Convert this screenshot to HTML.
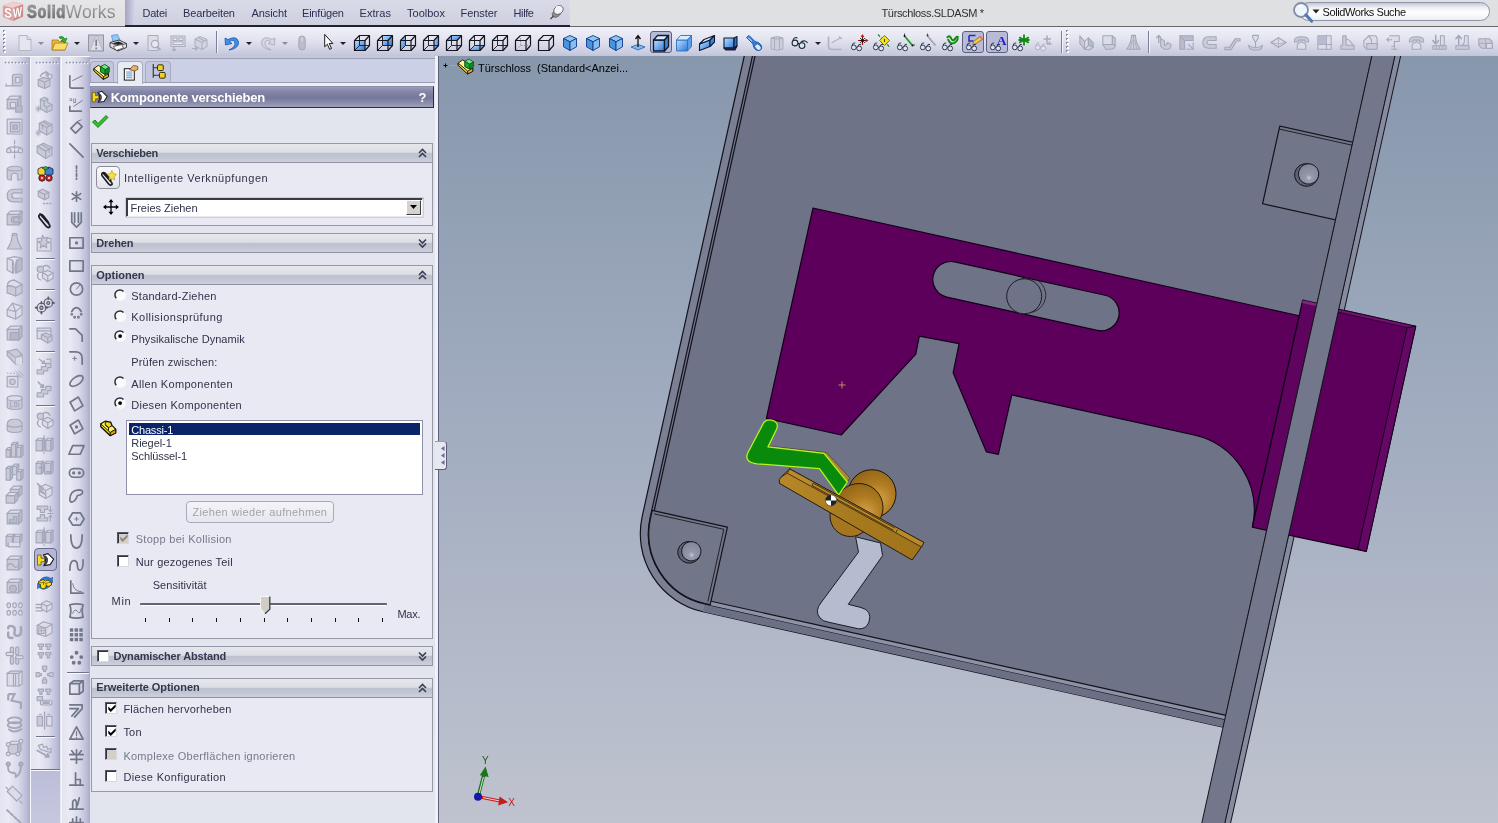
<!DOCTYPE html><html><head><meta charset="utf-8"><title>SolidWorks - Türschloss.SLDASM</title>
<style>
html,body{margin:0;padding:0}
body{width:1498px;height:823px;position:relative;overflow:hidden;background:#e3e5ee;font-family:'Liberation Sans',sans-serif;font-size:11px}
.t{position:absolute;white-space:nowrap;line-height:1;}
.ic{position:absolute;overflow:visible}
.abs{position:absolute}
.sec{position:absolute;left:91px;width:342px;border:1px solid #9799a9;box-sizing:border-box;background:#e8e9f2}
.sh{position:absolute;left:0;top:0;right:0;height:18px;border-bottom:1px solid #9092a2;
 background:linear-gradient(#e6e7ec 0%,#dcdee6 46%,#bec2d0 52%,#c2c6d3 75%,#cdd0dc 100%)}
.cb{position:absolute;width:11px;height:11px;background:#fff;border:1px solid;border-color:#55586a #d8d8e0 #d8d8e0 #55586a;box-shadow:inset 1px 1px 0 #303040}
.rb{position:absolute;width:11px;height:11px;border-radius:50%;background:#fff;box-shadow:inset 1px 1px 1.5px #30303c, 0.5px 0.5px 0 #fff}
</style></head><body><div id="root" style="position:absolute;left:0;top:0;width:1498px;height:823px;will-change:transform">
<svg width="0" height="0" style="position:absolute"><defs><linearGradient id="bl" x1="0" y1="0" x2="1" y2="1"><stop offset="0" stop-color="#bfe0ff"/><stop offset="1" stop-color="#2a78d8"/></linearGradient></defs></svg>
<div class="abs" style="left:0;top:0;width:1498px;height:26px;background:#dfe0e1;border-bottom:1px solid #66666c"></div>
<div class="abs" style="left:0;top:0;width:125px;height:26px;background:linear-gradient(#e6e6e8,#dedee2)"></div>
<div class="abs" style="left:125px;top:0;width:444.5px;height:25px;background:linear-gradient(#dadbe8,#cfd0df);border-bottom:2px solid #20212c"></div>
<div class="abs" style="left:125px;top:0;width:10px;height:25px;background:linear-gradient(90deg,#a3a5c3,#d5d6e8)"></div>
<svg class="ic" style="left:2px;top:1px" width="22" height="21" viewBox="0 0 22 21"><path d="M1 4.5 L11.5 1 L21 3.5 L21 15.5 L11 20 L1 16 Z" fill="#d99c9c" stroke="#e6bcbc" stroke-width="0.7"/><path d="M1 4.5 L11.5 1 L21 3.5 L11 7 Z" fill="#f0cfcf"/><path d="M11 7 V20 L21 15.5 V3.5 Z" fill="#cf8888"/><path d="M11 7 V20" stroke="#ecc4c4" stroke-width="0.8"/><text x="2.2" y="16.6" font-family="Liberation Sans,sans-serif" font-weight="bold" font-size="13.5" fill="#fff" transform="skewY(8)" style="transform-origin:6px 12px" textLength="7.6" lengthAdjust="spacingAndGlyphs">S</text><text x="11" y="16" font-family="Liberation Sans,sans-serif" font-weight="bold" font-size="13.5" fill="#fff" transform="skewY(-12)" style="transform-origin:16px 12px" textLength="9" lengthAdjust="spacingAndGlyphs">W</text></svg>
<span class="t" style="left:26.9px;top:3.69px;font-size:17.5px;font-weight:bold;color:#7c7c80;letter-spacing:0.000px;background:linear-gradient(#9a9a9c 25%,#6c6c70 80%);-webkit-background-clip:text;background-clip:text;-webkit-text-fill-color:transparent;transform:scaleX(0.84);transform-origin:0 0;letter-spacing:0.7px;-webkit-text-stroke:0.5px #808084;">Solid</span><span class="t" style="left:65.5px;top:3.69px;font-size:17.5px;font-weight:normal;color:#98989c;letter-spacing:0.184px;background:linear-gradient(#a0a0a2 25%,#7c7c80 80%);-webkit-background-clip:text;background-clip:text;-webkit-text-fill-color:transparent;">Works</span>
<span class="t" style="left:142.5px;top:8.19px;font-size:11px;font-weight:normal;color:#2c2f55;letter-spacing:-0.247px;">Datei</span>
<span class="t" style="left:183px;top:8.19px;font-size:11px;font-weight:normal;color:#2c2f55;letter-spacing:-0.135px;">Bearbeiten</span>
<span class="t" style="left:251.5px;top:8.19px;font-size:11px;font-weight:normal;color:#2c2f55;letter-spacing:-0.096px;">Ansicht</span>
<span class="t" style="left:302px;top:8.19px;font-size:11px;font-weight:normal;color:#2c2f55;letter-spacing:-0.205px;">Einfügen</span>
<span class="t" style="left:359.5px;top:8.19px;font-size:11px;font-weight:normal;color:#2c2f55;letter-spacing:0.062px;">Extras</span>
<span class="t" style="left:407px;top:8.19px;font-size:11px;font-weight:normal;color:#2c2f55;letter-spacing:0.013px;">Toolbox</span>
<span class="t" style="left:460.5px;top:8.19px;font-size:11px;font-weight:normal;color:#2c2f55;letter-spacing:-0.049px;">Fenster</span>
<span class="t" style="left:513.5px;top:8.19px;font-size:11px;font-weight:normal;color:#2c2f55;letter-spacing:-0.379px;">Hilfe</span>
<svg class="ic" style="left:547.5px;top:3px" width="18" height="18" viewBox="0 0 18 18"><ellipse cx="8.5" cy="10.5" rx="4.6" ry="3.4" transform="rotate(-35 8.5 10.5)" fill="#8c8e9a" stroke="#555" stroke-width="0.6"/><ellipse cx="10.5" cy="7" rx="5" ry="4" transform="rotate(-35 10.5 7)" fill="#f4f4f8" stroke="#666" stroke-width="0.9"/><path d="M8 4.5 Q10 3 12.5 3.8" stroke="#fff" stroke-width="1.2" fill="none"/><path d="M5.5 13 L2.5 16" stroke="#444" stroke-width="1.3"/></svg>
<span class="t" style="left:881.5px;top:7.89px;font-size:11px;font-weight:normal;color:#303030;letter-spacing:-0.351px;">Türschloss.SLDASM *</span>
<div class="abs" style="left:1299px;top:2px;width:191px;height:19px;border:1px solid #8e94a8;border-radius:10px;background:linear-gradient(#c6c9d6 0%,#eef0f5 28%,#ffffff 55%,#eceef4 100%);box-sizing:border-box"></div>
<svg class="ic" style="left:1292px;top:1px" width="22" height="24" viewBox="0 0 22 24"><circle cx="9" cy="9" r="7" fill="#eef4fb" stroke="#7f8da8" stroke-width="1.8"/><path d="M6 6 Q8 4 11 5" stroke="#fff" stroke-width="1.5" fill="none"/><path d="M14 14 L19.5 20" stroke="#4d79b8" stroke-width="3.2" stroke-linecap="round"/></svg>
<svg class="ic" style="left:1312px;top:9px" width="8" height="5" viewBox="0 0 8 5"><path d="M0.5 0.5 H7.5 L4 4.5 Z" fill="#222"/></svg>
<span class="t" style="left:1322.5px;top:6.89px;font-size:11px;font-weight:normal;color:#101010;letter-spacing:-0.411px;">SolidWorks Suche</span>
<div class="abs" style="left:0;top:27px;width:1498px;height:29px;background:linear-gradient(#eff0f8 0%,#e4e5f1 40%,#cfd1e3 80%,#c2c4d9 100%)"></div>
<div class="abs" style="left:4.2px;top:31px;width:2px;height:2px;background:#fff;box-shadow:-1px -1px 0 #8a8ca6"></div><div class="abs" style="left:4.2px;top:35px;width:2px;height:2px;background:#fff;box-shadow:-1px -1px 0 #8a8ca6"></div><div class="abs" style="left:4.2px;top:39px;width:2px;height:2px;background:#fff;box-shadow:-1px -1px 0 #8a8ca6"></div><div class="abs" style="left:4.2px;top:43px;width:2px;height:2px;background:#fff;box-shadow:-1px -1px 0 #8a8ca6"></div><div class="abs" style="left:4.2px;top:47px;width:2px;height:2px;background:#fff;box-shadow:-1px -1px 0 #8a8ca6"></div><div class="abs" style="left:4.2px;top:51px;width:2px;height:2px;background:#fff;box-shadow:-1px -1px 0 #8a8ca6"></div>
<div class="abs" style="left:1067px;top:31px;width:2px;height:2px;background:#fff;box-shadow:-1px -1px 0 #8a8ca6"></div><div class="abs" style="left:1067px;top:35px;width:2px;height:2px;background:#fff;box-shadow:-1px -1px 0 #8a8ca6"></div><div class="abs" style="left:1067px;top:39px;width:2px;height:2px;background:#fff;box-shadow:-1px -1px 0 #8a8ca6"></div><div class="abs" style="left:1067px;top:43px;width:2px;height:2px;background:#fff;box-shadow:-1px -1px 0 #8a8ca6"></div><div class="abs" style="left:1067px;top:47px;width:2px;height:2px;background:#fff;box-shadow:-1px -1px 0 #8a8ca6"></div><div class="abs" style="left:1067px;top:51px;width:2px;height:2px;background:#fff;box-shadow:-1px -1px 0 #8a8ca6"></div>
<svg class="ic" style="left:14.5px;top:32.5px" width="20.0" height="20.0" viewBox="0 0 20 20"><path d="M4 2.5 H12 L16 6.5 V17.5 H4 Z" fill="#e4e5ee" stroke="#b4b6c6"/><path d="M12 2.5 V6.5 H16" fill="none" stroke="#b4b6c6"/></svg><svg class="ic" style="left:38px;top:41.5px" width="6" height="3" viewBox="0 0 6 3"><path d="M0 0 H6 L3 3 Z" fill="#8a8c9c"/></svg><svg class="ic" style="left:49.5px;top:32.5px" width="20.0" height="20.0" viewBox="0 0 20 20"><path d="M2 7 H8 L9.5 8.5 H15 V17 H2 Z" fill="#e9b93a" stroke="#a8781a" stroke-width="0.8"/><path d="M2 17 L5 10 H18 L15 17 Z" fill="#fbdc6a" stroke="#a8781a" stroke-width="0.8"/><path d="M9 4 Q13 2 15 6 L17 5 L15 10 L11 7.5 L13 7 Q12 5 10 5.5 Z" fill="#2eb82e" stroke="#176a17" stroke-width="0.6"/></svg><svg class="ic" style="left:74px;top:41.5px" width="6" height="3" viewBox="0 0 6 3"><path d="M0 0 H6 L3 3 Z" fill="#222"/></svg><svg class="ic" style="left:86.0px;top:32.5px" width="20.0" height="20.0" viewBox="0 0 20 20"><rect x="2.5" y="2" width="15" height="16" fill="#c6c8d3" stroke="#9294a3"/><path d="M4 17 L9.5 3.5 H11 L16.5 17" fill="#dddee6" stroke="#a7a9b9" stroke-width="0.7"/><path d="M10.2 6.5 V13 M10.2 14.6 V16.2" stroke="#7e8090" stroke-width="1.7"/></svg><svg class="ic" style="left:108.0px;top:32.5px" width="20.0" height="20.0" viewBox="0 0 20 20"><path d="M5 9 L3.5 2.5 L9.5 1.5 L12.5 8" fill="#8ec8f6" stroke="#5a90c8" stroke-width="0.8"/><path d="M2 9.5 L11 7 L18.5 10.5 V14.5 L10 18 L2 14 Z" fill="#dcdce2" stroke="#333" stroke-width="0.9" stroke-linejoin="round"/><path d="M2 9.5 L10 13 L18.5 10.5 M10 13 V18" fill="none" stroke="#333" stroke-width="0.8"/><path d="M5.5 13.5 L8 17.5 L15.5 15 L13.5 11.5 Z" fill="#fff" stroke="#333" stroke-width="0.7"/><path d="M4.5 10.2 L10.5 8.6 L15.5 10.6 L10 12 Z" fill="#222"/></svg><svg class="ic" style="left:133px;top:41.5px" width="6" height="3" viewBox="0 0 6 3"><path d="M0 0 H6 L3 3 Z" fill="#222"/></svg><svg class="ic" style="left:143.5px;top:32.5px" width="20.0" height="20.0" viewBox="0 0 20 20"><g stroke="#a9acbd" fill="#dcdde6"><path d="M4 2.5 H14 V17.5 H4 Z"/><circle cx="11" cy="11" r="3.6" fill="#e8e9f0" stroke-width="1.3"/><path d="M13.5 13.8 L16.5 17" stroke-width="1.8"/></g></svg><svg class="ic" style="left:167.5px;top:32.5px" width="20.0" height="20.0" viewBox="0 0 20 20"><g stroke="#a9acbd" fill="#dcdde6"><rect x="3" y="3" width="14" height="10.5"/><rect x="5" y="5" width="4" height="2.5" fill="#eee"/><rect x="11" y="5" width="4" height="2.5" fill="#eee"/><rect x="5" y="9" width="10" height="2.5" fill="#eee"/><path d="M6 14 V18 M4 16 L6 18 L8 16" fill="none" stroke-width="1.2"/></g></svg><svg class="ic" style="left:190.0px;top:32.5px" width="20.0" height="20.0" viewBox="0 0 20 20"><g stroke="#a9acbd" fill="#d2d4df" stroke-linejoin="round"><path d="M5 6 L10 3.5 L17 6.5 V13.5 L12 16.5 L5 13 Z"/><path d="M5 6 L12 9.5 V16.5 M12 9.5 L17 6.5 M8 4.5 L14.5 8" fill="none"/><path d="M2 15.5 H7 M5 13.5 L7.2 15.5 L5 17.5" fill="none" stroke-width="1.2"/></g></svg><div class="abs" style="left:216px;top:31px;width:1px;height:22px;background:#7c7f98;box-shadow:1px 0 0 #f4f4fa"></div><svg class="ic" style="left:221.0px;top:32.5px" width="20.0" height="20.0" viewBox="0 0 20 20"><path d="M4 5 L4.5 12 L11 10.5 L8.5 8.5 Q13 5.5 14 10 Q14.5 14 8 17 Q18 15.5 17.5 9 Q16 2 7 6.5 Z" fill="#3f8fe8" stroke="#1b57a8" stroke-width="0.8" stroke-linejoin="round"/></svg><svg class="ic" style="left:245.5px;top:41.5px" width="6" height="3" viewBox="0 0 6 3"><path d="M0 0 H6 L3 3 Z" fill="#222"/></svg><svg class="ic" style="left:259.0px;top:32.5px" width="20.0" height="20.0" viewBox="0 0 20 20"><path d="M16 5 L15.5 12 L9 10.5 L11.5 8.5 Q7 5.5 6 10 Q5.5 14 12 17 Q2 15.5 2.5 9 Q4 2 13 6.5 Z" fill="#d4d6e0" stroke="#a6a8b8" stroke-width="0.8" stroke-linejoin="round"/></svg><svg class="ic" style="left:281.5px;top:41.5px" width="6" height="3" viewBox="0 0 6 3"><path d="M0 0 H6 L3 3 Z" fill="#8a8c9c"/></svg><svg class="ic" style="left:292.0px;top:32.5px" width="20.0" height="20.0" viewBox="0 0 20 20"><rect x="6.8" y="3" width="6.4" height="14" rx="3.2" fill="#bbbdca" stroke="#a6a8b8"/><path d="M10 4.5 V8.5" stroke="#d8d9e2" stroke-width="1.6"/></svg><svg class="ic" style="left:319.0px;top:33.0px" width="19.0" height="19.0" viewBox="0 0 20 20"><path d="M6 1.5 V14.5 L8.8 11.8 L11.2 17.2 L13.2 16.3 L10.8 11 H14.6 Z" fill="#fff" stroke="#111" stroke-width="1" stroke-linejoin="round"/></svg><svg class="ic" style="left:340px;top:41.5px" width="6" height="3" viewBox="0 0 6 3"><path d="M0 0 H6 L3 3 Z" fill="#222"/></svg><svg class="ic" style="left:352.0px;top:32.5px" width="20.0" height="20.0" viewBox="0 0 20 20"><g fill="none" stroke="#15151d" stroke-width="1.2" stroke-linejoin="round"><path d="M2.5 7.5 H13 V17.5 H2.5 Z" fill="url(#bl)" stroke="none"/><path d="M2.5 7.5 H13 V17.5 H2.5 Z"/><path d="M2.5 7.5 L7.5 2.5 H17.5 L13 7.5 M17.5 2.5 V12.5 L13 17.5"/><path d="M7.5 2.5 V12.5 H17.5 M7.5 12.5 L2.5 17.5" stroke-width="0.9"/></g></svg><svg class="ic" style="left:375.0px;top:32.5px" width="20.0" height="20.0" viewBox="0 0 20 20"><g fill="none" stroke="#15151d" stroke-width="1.2" stroke-linejoin="round"><path d="M7.5 2.5 H17.5 V12.5 H7.5 Z" fill="url(#bl)" stroke="none"/><path d="M2.5 7.5 H13 V17.5 H2.5 Z"/><path d="M2.5 7.5 L7.5 2.5 H17.5 L13 7.5 M17.5 2.5 V12.5 L13 17.5"/><path d="M7.5 2.5 V12.5 H17.5 M7.5 12.5 L2.5 17.5" stroke-width="0.9"/></g></svg><svg class="ic" style="left:398.0px;top:32.5px" width="20.0" height="20.0" viewBox="0 0 20 20"><g fill="none" stroke="#15151d" stroke-width="1.2" stroke-linejoin="round"><path d="M2.5 7.5 L7.5 2.5 V12.5 L2.5 17.5 Z" fill="url(#bl)" stroke="none"/><path d="M2.5 7.5 H13 V17.5 H2.5 Z"/><path d="M2.5 7.5 L7.5 2.5 H17.5 L13 7.5 M17.5 2.5 V12.5 L13 17.5"/><path d="M7.5 2.5 V12.5 H17.5 M7.5 12.5 L2.5 17.5" stroke-width="0.9"/></g></svg><svg class="ic" style="left:421.0px;top:32.5px" width="20.0" height="20.0" viewBox="0 0 20 20"><g fill="none" stroke="#15151d" stroke-width="1.2" stroke-linejoin="round"><path d="M13 7.5 L17.5 2.5 V12.5 L13 17.5 Z" fill="url(#bl)" stroke="none"/><path d="M2.5 7.5 H13 V17.5 H2.5 Z"/><path d="M2.5 7.5 L7.5 2.5 H17.5 L13 7.5 M17.5 2.5 V12.5 L13 17.5"/><path d="M7.5 2.5 V12.5 H17.5 M7.5 12.5 L2.5 17.5" stroke-width="0.9"/></g></svg><svg class="ic" style="left:444.0px;top:32.5px" width="20.0" height="20.0" viewBox="0 0 20 20"><g fill="none" stroke="#15151d" stroke-width="1.2" stroke-linejoin="round"><path d="M2.5 7.5 L7.5 2.5 H17.5 L13 7.5 Z" fill="url(#bl)" stroke="none"/><path d="M2.5 7.5 H13 V17.5 H2.5 Z"/><path d="M2.5 7.5 L7.5 2.5 H17.5 L13 7.5 M17.5 2.5 V12.5 L13 17.5"/><path d="M7.5 2.5 V12.5 H17.5 M7.5 12.5 L2.5 17.5" stroke-width="0.9"/></g></svg><svg class="ic" style="left:467.0px;top:32.5px" width="20.0" height="20.0" viewBox="0 0 20 20"><g fill="none" stroke="#15151d" stroke-width="1.2" stroke-linejoin="round"><path d="M2.5 17.5 L7.5 12.5 H17.5 L13 17.5 Z" fill="url(#bl)" stroke="none"/><path d="M2.5 7.5 H13 V17.5 H2.5 Z"/><path d="M2.5 7.5 L7.5 2.5 H17.5 L13 7.5 M17.5 2.5 V12.5 L13 17.5"/><path d="M7.5 2.5 V12.5 H17.5 M7.5 12.5 L2.5 17.5" stroke-width="0.9"/></g></svg><svg class="ic" style="left:490.0px;top:32.5px" width="20.0" height="20.0" viewBox="0 0 20 20"><g fill="none" stroke="#15151d" stroke-width="1.2" stroke-linejoin="round"><path d="M2.5 7.5 H13 V17.5 H2.5 Z"/><path d="M2.5 7.5 L7.5 2.5 H17.5 L13 7.5 M17.5 2.5 V12.5 L13 17.5"/><path d="M7.5 2.5 V12.5 H17.5 M7.5 12.5 L2.5 17.5" stroke-width="0.9"/></g></svg><svg class="ic" style="left:513.0px;top:32.5px" width="20.0" height="20.0" viewBox="0 0 20 20"><g fill="none" stroke="#15151d" stroke-width="1.2" stroke-linejoin="round"><path d="M2.5 7.5 H13 V17.5 H2.5 Z"/><path d="M2.5 7.5 L7.5 2.5 H17.5 L13 7.5 M17.5 2.5 V12.5 L13 17.5"/><path d="M7.5 2.5 V12.5 H17.5 M7.5 12.5 L2.5 17.5" stroke="#8a8c9c" stroke-width="0.9" stroke-dasharray="1.5 1.2"/></g></svg><svg class="ic" style="left:536.0px;top:32.5px" width="20.0" height="20.0" viewBox="0 0 20 20"><g fill="none" stroke="#15151d" stroke-width="1.2" stroke-linejoin="round"><path d="M2.5 7.5 H13 V17.5 H2.5 Z"/><path d="M2.5 7.5 L7.5 2.5 H17.5 L13 7.5 M17.5 2.5 V12.5 L13 17.5"/></g></svg><svg class="ic" style="left:560.2px;top:32.5px" width="20.0" height="20.0" viewBox="0 0 20 20"><g stroke="#0d3a88" stroke-width="0.9" stroke-linejoin="round"><path d="M10 2.5 L16.5 5.5 L10 8.8 L3.5 5.5 Z" fill="#8ec4f2"/><path d="M3.5 5.5 L10 8.8 V17.5 L3.5 13.8 Z" fill="#4a94dc"/><path d="M16.5 5.5 L10 8.8 V17.5 L16.5 13.8 Z" fill="#86bdf0"/></g></svg><svg class="ic" style="left:583.2px;top:32.5px" width="20.0" height="20.0" viewBox="0 0 20 20"><g stroke="#0d3a88" stroke-width="0.9" stroke-linejoin="round"><path d="M10 2.5 L16.5 5.5 L10 8.8 L3.5 5.5 Z" fill="#8ec4f2"/><path d="M3.5 5.5 L10 8.8 V17.5 L3.5 13.8 Z" fill="#4a94dc"/><path d="M16.5 5.5 L10 8.8 V17.5 L16.5 13.8 Z" fill="#86bdf0"/></g></svg><svg class="ic" style="left:606.2px;top:32.5px" width="20.0" height="20.0" viewBox="0 0 20 20"><g stroke="#0d3a88" stroke-width="0.9" stroke-linejoin="round"><path d="M10 2.5 L16.5 5.5 L10 8.8 L3.5 5.5 Z" fill="#8ec4f2"/><path d="M3.5 5.5 L10 8.8 V17.5 L3.5 13.8 Z" fill="#4a94dc"/><path d="M16.5 5.5 L10 8.8 V17.5 L16.5 13.8 Z" fill="#86bdf0"/></g></svg><svg class="ic" style="left:627.5px;top:32.5px" width="20.0" height="20.0" viewBox="0 0 20 20"><path d="M3 14 L10 11.5 L17 14 L10 17 Z" fill="#7db8f0" stroke="#2060b0" stroke-width="0.8"/><path d="M10 14 V3 M7.5 6 L10 2.5 L12.5 6" fill="none" stroke="#111" stroke-width="1.3"/></svg><div class="abs" style="left:650px;top:31px;width:22px;height:22px;border:1px solid #5d6080;border-radius:3px;background:#b9bbd6;box-sizing:border-box"></div><svg class="ic" style="left:651.0px;top:32.5px" width="20.0" height="20.0" viewBox="0 0 20 20"><g stroke="#101830" stroke-width="1.3" stroke-linejoin="round"><path d="M2.5 7 H13.5 V18 H2.5 Z" fill="url(#bl)"/><path d="M2.5 7 L6.5 2.5 H17.5 L13.5 7 Z" fill="#d8ecff"/><path d="M13.5 7 L17.5 2.5 V13.5 L13.5 18 Z" fill="#3d86dc"/></g></svg><svg class="ic" style="left:674.0px;top:32.5px" width="20.0" height="20.0" viewBox="0 0 20 20"><g stroke="#2d6fc4" stroke-width="0.9" stroke-linejoin="round"><path d="M2.5 7 H13.5 V18 H2.5 Z" fill="url(#bl)"/><path d="M2.5 7 L6.5 2.5 H17.5 L13.5 7 Z" fill="#d8ecff"/><path d="M13.5 7 L17.5 2.5 V13.5 L13.5 18 Z" fill="#5a9ce6"/></g></svg><svg class="ic" style="left:696.5px;top:32.5px" width="20.0" height="20.0" viewBox="0 0 20 20"><g stroke="#101830" stroke-width="1.1" stroke-linejoin="round"><path d="M2.5 11 L13 7 V13.5 L2.5 17.5 Z" fill="url(#bl)"/><path d="M2.5 11 L7 6.5 L17.5 2.5 L13 7 Z" fill="#d8ecff"/><path d="M13 7 L17.5 2.5 V9 L13 13.5 Z" fill="#3d86dc"/></g></svg><svg class="ic" style="left:719.5px;top:32.5px" width="20.0" height="20.0" viewBox="0 0 20 20"><g stroke="#101830" stroke-width="1.1" stroke-linejoin="round"><path d="M4 5 H14 V15 H4 Z" fill="url(#bl)"/><path d="M14 5 L17 3.5 V13 L14 15 Z" fill="#2d6fc4"/><path d="M4 15 L14 15 L17 13 L15 17 H6 Z" fill="#1d2d5a"/></g></svg><svg class="ic" style="left:743.5px;top:32.5px" width="20.0" height="20.0" viewBox="0 0 20 20"><path d="M2.5 4.5 L5 2.5 L11 8.5 Q15 9 17 12 Q19 16.5 15 17.5 Q10.5 17.5 9.5 13 Q9 11 8.5 10.5 Z" fill="#2f7fe0" stroke="#174a9c" stroke-width="0.9"/><ellipse cx="14" cy="14.2" rx="2.6" ry="3.6" transform="rotate(-45 14 14.2)" fill="#d6ecff" stroke="#174a9c" stroke-width="0.7"/><path d="M4 4.5 L8 8.5" stroke="#9cc8f4" stroke-width="1.2"/></svg><svg class="ic" style="left:767.0px;top:32.5px" width="20.0" height="20.0" viewBox="0 0 20 20"><g stroke="#a9acbd" stroke-width="1" fill="#cdcfdc"><path d="M4 5 Q10 2 16 5 V16 Q10 18.5 4 16 Z"/><path d="M7.5 4.5 V17 M12.5 4.5 V17" fill="none"/><path d="M4 5 Q10 7 16 5" fill="none"/></g></svg><svg class="ic" style="left:789.0px;top:32.5px" width="20.0" height="20.0" viewBox="0 0 20 20"><g fill="#d4e9f8" stroke="#26283a" stroke-width="1.1"><circle cx="6" cy="10" r="2.9"/><circle cx="13" cy="12.6" r="2.9"/><path d="M4 7.5 Q5 3.5 8.5 5 M11.5 10 Q13 7.5 16 8 Q18 8.5 18.5 10 M8.9 10.6 Q9.6 10 10.2 11.5" fill="none"/></g></svg><svg class="ic" style="left:814.7px;top:41.5px" width="6" height="3" viewBox="0 0 6 3"><path d="M0 0 H6 L3 3 Z" fill="#222"/></svg><svg class="ic" style="left:825.0px;top:32.5px" width="20.0" height="20.0" viewBox="0 0 20 20"><g fill="none" stroke="#b0b2c2" stroke-width="1.6"><path d="M3.5 3.5 V13 Q3.5 16.5 7 16.5 H16.5"/><path d="M6.5 10 L16 4.5 M14 3.5 L17 6" stroke-width="1.1"/></g></svg><svg class="ic" style="left:848.7px;top:32.5px" width="20.0" height="20.0" viewBox="0 0 20 20"><path d="M13.5 2.5 V12 M9 7.5 H18" stroke="#c81818" stroke-width="1.2" fill="none"/><path d="M13.5 1 L11.6 4 H15.4 Z M19.5 7.5 L16.5 5.6 V9.4 Z" fill="#c81818"/><path d="M11 5 L16 10 M16 5 L11 10 M13.5 4.5 V10.5 M10.5 7.5 H16.5" stroke="#111" stroke-width="0.8"/><g fill="#d4e9f8" stroke="#26283a" stroke-width="0.9"><circle cx="4.8" cy="14.4" r="2.4"/><circle cx="10.2" cy="15.4" r="2.4"/><path d="M3 12.4 Q3.6 9.4 6.2 10 M8.8 13.4 Q9.6 10.6 12 11.4 M7.2 14.6 Q7.6 14 7.9 14.9" fill="none"/></g></svg><svg class="ic" style="left:871.0px;top:32.5px" width="20.0" height="20.0" viewBox="0 0 20 20"><path d="M7 1.5 L19 14.5" stroke="#118a11" stroke-width="1.2" stroke-dasharray="3 1.5"/><path d="M13.5 2.5 L18.5 7.5 L13.5 12.5 L8.5 7.5 Z" fill="#f2e21e" stroke="#5a5a10" stroke-width="0.8"/><path d="M13.5 6 V9" stroke="#444" stroke-width="1"/><g fill="#d4e9f8" stroke="#26283a" stroke-width="0.9"><circle cx="4.8" cy="14.4" r="2.4"/><circle cx="10.2" cy="15.4" r="2.4"/><path d="M3 12.4 Q3.6 9.4 6.2 10 M8.8 13.4 Q9.6 10.6 12 11.4 M7.2 14.6 Q7.6 14 7.9 14.9" fill="none"/></g></svg><svg class="ic" style="left:894.5px;top:32.5px" width="20.0" height="20.0" viewBox="0 0 20 20"><path d="M9.5 3 L17.5 12.5" stroke="#16a016" stroke-width="1.8"/><path d="M9.5 0.5 V3.5 M18 12 H20" stroke="#333" stroke-width="0.9"/><circle cx="9.5" cy="3" r="0.9" fill="#111"/><circle cx="17.5" cy="12.5" r="0.9" fill="#111"/><g fill="#d4e9f8" stroke="#26283a" stroke-width="0.9"><circle cx="4.8" cy="14.4" r="2.4"/><circle cx="10.2" cy="15.4" r="2.4"/><path d="M3 12.4 Q3.6 9.4 6.2 10 M8.8 13.4 Q9.6 10.6 12 11.4 M7.2 14.6 Q7.6 14 7.9 14.9" fill="none"/></g></svg><svg class="ic" style="left:917.5px;top:32.5px" width="20.0" height="20.0" viewBox="0 0 20 20"><path d="M9.5 3 L17.5 12.5" stroke="#a2a4b4" stroke-width="1.8"/><circle cx="9.5" cy="2.5" r="1" fill="#444"/><path d="M9.5 0.5 V2" stroke="#444" stroke-width="0.8"/><g fill="#d4e9f8" stroke="#26283a" stroke-width="0.9"><circle cx="4.8" cy="14.4" r="2.4"/><circle cx="10.2" cy="15.4" r="2.4"/><path d="M3 12.4 Q3.6 9.4 6.2 10 M8.8 13.4 Q9.6 10.6 12 11.4 M7.2 14.6 Q7.6 14 7.9 14.9" fill="none"/></g></svg><svg class="ic" style="left:940.0px;top:32.5px" width="20.0" height="20.0" viewBox="0 0 20 20"><path d="M7 5 Q9 1.5 11 5 Q12.5 9 15 6 Q16.5 2.5 18.5 4.5 M8 6 Q9.5 10.5 12.5 10.5 Q16.5 10 18 5" stroke="#128a12" stroke-width="2" fill="none"/><g fill="#d4e9f8" stroke="#26283a" stroke-width="0.9"><circle cx="4.8" cy="14.4" r="2.4"/><circle cx="10.2" cy="15.4" r="2.4"/><path d="M3 12.4 Q3.6 9.4 6.2 10 M8.8 13.4 Q9.6 10.6 12 11.4 M7.2 14.6 Q7.6 14 7.9 14.9" fill="none"/></g></svg><div class="abs" style="left:962.2px;top:31px;width:22px;height:22px;border:1px solid #5d6080;border-radius:3px;background:#b9bbd6;box-sizing:border-box"></div><svg class="ic" style="left:963.7px;top:32.5px" width="20.0" height="20.0" viewBox="0 0 20 20"><path d="M5 2.5 H11.5 M5 2.5 V8 H9.5" stroke="#2a2ac4" stroke-width="1.6" fill="none"/><path d="M9.5 8.5 L16 3.5 L18.8 6.2 L11.5 11 L8.8 11.5 Z" fill="#f3c64a" stroke="#7a5a10" stroke-width="0.7"/><path d="M16 3.5 L18.8 6.2" stroke="#e07070" stroke-width="1.8"/><g fill="#d4e9f8" stroke="#26283a" stroke-width="0.9"><circle cx="4.8" cy="14.4" r="2.4"/><circle cx="10.2" cy="15.4" r="2.4"/><path d="M3 12.4 Q3.6 9.4 6.2 10 M8.8 13.4 Q9.6 10.6 12 11.4 M7.2 14.6 Q7.6 14 7.9 14.9" fill="none"/></g></svg><div class="abs" style="left:986.0px;top:31px;width:22px;height:22px;border:1px solid #5d6080;border-radius:3px;background:#b9bbd6;box-sizing:border-box"></div><svg class="ic" style="left:987.5px;top:32.5px" width="20.0" height="20.0" viewBox="0 0 20 20"><text x="8.8" y="11.5" font-family="Liberation Serif,serif" font-weight="bold" font-size="13.5" fill="#2222cc">A</text><g fill="#d4e9f8" stroke="#26283a" stroke-width="0.9"><circle cx="4.8" cy="14.4" r="2.4"/><circle cx="10.2" cy="15.4" r="2.4"/><path d="M3 12.4 Q3.6 9.4 6.2 10 M8.8 13.4 Q9.6 10.6 12 11.4 M7.2 14.6 Q7.6 14 7.9 14.9" fill="none"/></g></svg><svg class="ic" style="left:1009.5px;top:32.5px" width="20.0" height="20.0" viewBox="0 0 20 20"><path d="M14 1.5 V12.5 M9.2 4.2 L18.8 9.8 M18.8 4.2 L9.2 9.8 M8.5 7 H19.5" stroke="#118a11" stroke-width="1.8"/><g fill="#d4e9f8" stroke="#26283a" stroke-width="0.9"><circle cx="4.8" cy="14.4" r="2.4"/><circle cx="10.2" cy="15.4" r="2.4"/><path d="M3 12.4 Q3.6 9.4 6.2 10 M8.8 13.4 Q9.6 10.6 12 11.4 M7.2 14.6 Q7.6 14 7.9 14.9" fill="none"/></g></svg><svg class="ic" style="left:1032.5px;top:32.5px" width="20.0" height="20.0" viewBox="0 0 20 20"><path d="M14 2.5 V11 M10.5 6 H18 M14 11 H18.5 M16.5 8.5 V11" stroke="#a8aaba" stroke-width="1.5" fill="none"/><g fill="#e2e4ee" stroke="#a8aaba" stroke-width="0.9"><circle cx="4.8" cy="14.4" r="2.4"/><circle cx="10.2" cy="15.4" r="2.4"/><path d="M3 12.4 Q3.6 9.4 6.2 10 M8.8 13.4 Q9.6 10.6 12 11.4 M7.2 14.6 Q7.6 14 7.9 14.9" fill="none"/></g></svg><div class="abs" style="left:1061px;top:31px;width:1px;height:22px;background:#7c7f98;box-shadow:1px 0 0 #f4f4fa"></div><svg class="ic" style="left:1076.5px;top:33.0px" width="19.0" height="19.0" viewBox="0 0 20 20"><g stroke="#a4a7ba" stroke-width="1.1" stroke-linejoin="round" stroke-linecap="round" fill="#c9cbd9"><path d="M3 3 L8 9 V17 L3 11 Z"/><path d="M8 9 L12 5 V13 L8 17 Z" fill="#dcdde8"/><path d="M12 5 L17 10 V15 L12 13 Z" fill="#b9bbcd"/><path d="M8 17 L13 18 L17 15"/></g></svg><svg class="ic" style="left:1099.5px;top:33.0px" width="19.0" height="19.0" viewBox="0 0 20 20"><g stroke="#a4a7ba" stroke-width="1.1" stroke-linejoin="round" stroke-linecap="round" fill="#c9cbd9"><rect x="3" y="3" width="10" height="9" fill="#dcdde8"/><path d="M13 3 L16 5.5 V13 Q16 17 11 17 H6 L3 12 H13 Z"/><path d="M13 12 L16 13"/></g></svg><svg class="ic" style="left:1123.5px;top:33.0px" width="19.0" height="19.0" viewBox="0 0 20 20"><g stroke="#a4a7ba" stroke-width="1.1" stroke-linejoin="round" stroke-linecap="round" fill="#c9cbd9"><path d="M8 2.5 H12 Q12.5 11 17 17 H3 Q7.5 11 8 2.5 Z"/><path d="M10 3 V17 M8.7 8 Q7.5 13 6.5 17 M11.3 8 Q12.5 13 13.5 17" fill="none" stroke-width="0.8"/></g></svg><svg class="ic" style="left:1153.5px;top:33.0px" width="19.0" height="19.0" viewBox="0 0 20 20"><g stroke="#a4a7ba" stroke-width="1.1" stroke-linejoin="round" stroke-linecap="round" fill="#c9cbd9"><path d="M7 6 V14 L11 17 H15 Q18 16 18 12 L14 10 Q14 13 11 13 V8 Z"/><path d="M5 10 V2.5 M2.8 5 L5 2.5 L7.2 5" fill="none" stroke-width="1.4"/></g></svg><svg class="ic" style="left:1177.3px;top:33.0px" width="19.0" height="19.0" viewBox="0 0 20 20"><g stroke="#a4a7ba" stroke-width="1.1" stroke-linejoin="round" stroke-linecap="round" fill="#c9cbd9"><path d="M3 3 H17 V8 H8 V17 H3 Z" fill="#b9bbcd"/><path d="M3 3 L8 8 M12 12 L17 17 M10 17 H17 V10" fill="none"/></g></svg><svg class="ic" style="left:1199.5px;top:33.0px" width="19.0" height="19.0" viewBox="0 0 20 20"><g stroke="#a4a7ba" stroke-width="1.1" stroke-linejoin="round" stroke-linecap="round" fill="#c9cbd9"><path d="M17 4 H9 Q3 4 3 10 Q3 16 9 16 H17 V12 H9.5 Q7.5 12 7.5 10 Q7.5 8 9.5 8 H17 Z"/></g></svg><svg class="ic" style="left:1222.5px;top:33.0px" width="19.0" height="19.0" viewBox="0 0 20 20"><g stroke="#a4a7ba" stroke-width="1.1" stroke-linejoin="round" stroke-linecap="round" fill="#c9cbd9"><path d="M2 15 H7 L13 6 H18 V8.5 H14.5 L8.5 17.5 H2 Z"/><path d="M7 15 L13 6" fill="none"/></g></svg><svg class="ic" style="left:1245.5px;top:33.0px" width="19.0" height="19.0" viewBox="0 0 20 20"><g stroke="#a4a7ba" stroke-width="1.1" stroke-linejoin="round" stroke-linecap="round" fill="#c9cbd9"><path d="M7 2.5 H13 V5 L10 10 L7 5 Z" fill="#dcdde8"/><path d="M2.5 13 Q10 18 17.5 13 L16 16.5 Q10 20 4 16.5 Z"/><path d="M10 10 V15" fill="none"/></g></svg><svg class="ic" style="left:1268.5px;top:33.0px" width="19.0" height="19.0" viewBox="0 0 20 20"><g stroke="#a4a7ba" stroke-width="1.1" stroke-linejoin="round" stroke-linecap="round" fill="#c9cbd9"><path d="M2 10 L10 5 L18 10 L10 15 Z" fill="#dcdde8"/><path d="M2 10 L10 11.5 L18 10 M10 5 V15" fill="none" stroke-width="0.8"/></g></svg><svg class="ic" style="left:1291.5px;top:33.0px" width="19.0" height="19.0" viewBox="0 0 20 20"><g stroke="#a4a7ba" stroke-width="1.1" stroke-linejoin="round" stroke-linecap="round" fill="#c9cbd9"><path d="M2.5 8 Q2.5 4 10 4 Q17.5 4 17.5 8 V9.5 H13.5 V7.5 H6.5 V9.5 H2.5 Z"/><path d="M5.5 17 V12 L10 9 L14.5 12 V17 Z" fill="#dcdde8"/></g></svg><svg class="ic" style="left:1314.5px;top:33.0px" width="19.0" height="19.0" viewBox="0 0 20 20"><g stroke="#a4a7ba" stroke-width="1.1" stroke-linejoin="round" stroke-linecap="round" fill="#c9cbd9"><rect x="3" y="3" width="14" height="14" fill="#dcdde8"/><path d="M12 3 V17 M3 12 H17" fill="none"/><rect x="3" y="3" width="9" height="9" fill="#b9bbcd" stroke="none"/></g></svg><svg class="ic" style="left:1337.5px;top:33.0px" width="19.0" height="19.0" viewBox="0 0 20 20"><g stroke="#a4a7ba" stroke-width="1.1" stroke-linejoin="round" stroke-linecap="round" fill="#c9cbd9"><path d="M5 3 H8.5 V13 H17 V17 H3 V13 H5 Z"/><path d="M8.5 6 Q14 8 15.5 13" fill="none"/></g></svg><svg class="ic" style="left:1361.0px;top:33.0px" width="19.0" height="19.0" viewBox="0 0 20 20"><g stroke="#a4a7ba" stroke-width="1.1" stroke-linejoin="round" stroke-linecap="round" fill="#c9cbd9"><path d="M3 8 L8 3 H14 Q17 3 17 7 V14 L14 17 H6 L3 14 Z" fill="#dcdde8"/><path d="M6 11 H17 V17 H6 Z"/><path d="M8 3 L11 7 V11" fill="none"/></g></svg><svg class="ic" style="left:1384.0px;top:33.0px" width="19.0" height="19.0" viewBox="0 0 20 20"><g stroke="#a4a7ba" stroke-width="1.1" stroke-linejoin="round" stroke-linecap="round" fill="#c9cbd9"><path d="M6 3 H16 V9 H11 V14 H8" fill="#dcdde8"/><path d="M11 9 V17 M3 7 H8 M5 5 L3 7 L5 9" fill="none"/><path d="M8 17 H14" fill="none"/></g></svg><svg class="ic" style="left:1406.5px;top:33.0px" width="19.0" height="19.0" viewBox="0 0 20 20"><g stroke="#a4a7ba" stroke-width="1.1" stroke-linejoin="round" stroke-linecap="round" fill="#c9cbd9"><path d="M2.5 8 Q2.5 4 10 4 Q17.5 4 17.5 8 V9.5 H13.5 V7.5 H6.5 V9.5 H2.5 Z"/><path d="M5.5 17 V12 L10 9 L14.5 12 V17 Z" fill="#dcdde8"/></g></svg><svg class="ic" style="left:1429.5px;top:33.0px" width="19.0" height="19.0" viewBox="0 0 20 20"><g stroke="#a4a7ba" stroke-width="1.1" stroke-linejoin="round" stroke-linecap="round" fill="#c9cbd9"><path d="M6 2.5 V11 M3 8 L6 11.5 L9 8" fill="none" stroke-width="1.6"/><path d="M11 3 H15 V13 H11 Z" fill="#dcdde8"/><rect x="3" y="13.5" width="14" height="3.5"/><path d="M6.5 13.5 V17 M10 13.5 V17 M13.5 13.5 V17" fill="none" stroke-width="0.8"/></g></svg><svg class="ic" style="left:1452.5px;top:33.0px" width="19.0" height="19.0" viewBox="0 0 20 20"><g stroke="#a4a7ba" stroke-width="1.1" stroke-linejoin="round" stroke-linecap="round" fill="#c9cbd9"><path d="M6 12 V3 M3 6 L6 2.5 L9 6" fill="none" stroke-width="1.6"/><path d="M12 3 H16 V13 H9 Q12 12 12 8 Z" fill="#dcdde8"/><rect x="3" y="13.5" width="14" height="3.5"/></g></svg><svg class="ic" style="left:1475.5px;top:33.0px" width="19.0" height="19.0" viewBox="0 0 20 20"><g stroke="#a4a7ba" stroke-width="1.1" stroke-linejoin="round" stroke-linecap="round" fill="#c9cbd9"><path d="M3 6 H14 L17 9 V16 H6 L3 13 Z"/><path d="M3 11 H17 M10 6 V16" fill="none" stroke-width="0.8"/><path d="M11 11 H17 V16 H11 Z" fill="#dcdde8"/></g></svg><div class="abs" style="left:1148px;top:31px;width:1px;height:22px;background:#7c7f98;box-shadow:1px 0 0 #f4f4fa"></div>
<div class="abs" style="left:0;top:56px;width:29.5px;height:767px;background:linear-gradient(90deg,#e3e4f0 0%,#e9eaf4 28%,#d9daea 60%,#bcbed8 88%,#a8abc8 100%)"></div>
<div class="abs" style="left:29.5px;top:56px;width:1.2px;height:767px;background:#f8f8fc"></div>
<div class="abs" style="left:30.7px;top:56px;width:29.8px;height:713px;background:linear-gradient(90deg,#e3e4f0 0%,#e9eaf4 28%,#d9daea 60%,#bcbed8 88%,#a8abc8 100%)"></div>
<div class="abs" style="left:30.7px;top:769px;width:29.8px;height:54px;background:linear-gradient(#bcbed9,#c6c8df);border-top:1px solid #6e7190;box-shadow:inset 0 1px 0 #f4f4fa"></div>
<div class="abs" style="left:60.5px;top:56px;width:1.2px;height:767px;background:#f8f8fc"></div>
<div class="abs" style="left:61.7px;top:56px;width:28.8px;height:767px;background:linear-gradient(90deg,#e3e4f0 0%,#e9eaf4 28%,#d9daea 60%,#bcbed8 88%,#a8abc8 100%)"></div>
<div class="abs" style="left:0;top:56px;width:90.5px;height:1.3px;background:#f7f7fb"></div>
<svg class="ic" style="left:3.6000000000000005px;top:60.6px" width="26" height="4" viewBox="0 0 26 4"><rect x="1.60" y="1.6" width="1.6" height="1.6" fill="#fff"/><rect x="0.80" y="0.8" width="1.6" height="1.6" fill="#8c8ea8"/><rect x="4.95" y="1.6" width="1.6" height="1.6" fill="#fff"/><rect x="4.15" y="0.8" width="1.6" height="1.6" fill="#8c8ea8"/><rect x="8.30" y="1.6" width="1.6" height="1.6" fill="#fff"/><rect x="7.50" y="0.8" width="1.6" height="1.6" fill="#8c8ea8"/><rect x="11.65" y="1.6" width="1.6" height="1.6" fill="#fff"/><rect x="10.85" y="0.8" width="1.6" height="1.6" fill="#8c8ea8"/><rect x="15.00" y="1.6" width="1.6" height="1.6" fill="#fff"/><rect x="14.20" y="0.8" width="1.6" height="1.6" fill="#8c8ea8"/><rect x="18.35" y="1.6" width="1.6" height="1.6" fill="#fff"/><rect x="17.55" y="0.8" width="1.6" height="1.6" fill="#8c8ea8"/><rect x="21.70" y="1.6" width="1.6" height="1.6" fill="#fff"/><rect x="20.90" y="0.8" width="1.6" height="1.6" fill="#8c8ea8"/></svg><svg class="ic" style="left:34.5px;top:60.6px" width="26" height="4" viewBox="0 0 26 4"><rect x="1.60" y="1.6" width="1.6" height="1.6" fill="#fff"/><rect x="0.80" y="0.8" width="1.6" height="1.6" fill="#8c8ea8"/><rect x="4.95" y="1.6" width="1.6" height="1.6" fill="#fff"/><rect x="4.15" y="0.8" width="1.6" height="1.6" fill="#8c8ea8"/><rect x="8.30" y="1.6" width="1.6" height="1.6" fill="#fff"/><rect x="7.50" y="0.8" width="1.6" height="1.6" fill="#8c8ea8"/><rect x="11.65" y="1.6" width="1.6" height="1.6" fill="#fff"/><rect x="10.85" y="0.8" width="1.6" height="1.6" fill="#8c8ea8"/><rect x="15.00" y="1.6" width="1.6" height="1.6" fill="#fff"/><rect x="14.20" y="0.8" width="1.6" height="1.6" fill="#8c8ea8"/><rect x="18.35" y="1.6" width="1.6" height="1.6" fill="#fff"/><rect x="17.55" y="0.8" width="1.6" height="1.6" fill="#8c8ea8"/><rect x="21.70" y="1.6" width="1.6" height="1.6" fill="#fff"/><rect x="20.90" y="0.8" width="1.6" height="1.6" fill="#8c8ea8"/></svg><svg class="ic" style="left:65.2px;top:60.6px" width="26" height="4" viewBox="0 0 26 4"><rect x="1.60" y="1.6" width="1.6" height="1.6" fill="#fff"/><rect x="0.80" y="0.8" width="1.6" height="1.6" fill="#8c8ea8"/><rect x="4.95" y="1.6" width="1.6" height="1.6" fill="#fff"/><rect x="4.15" y="0.8" width="1.6" height="1.6" fill="#8c8ea8"/><rect x="8.30" y="1.6" width="1.6" height="1.6" fill="#fff"/><rect x="7.50" y="0.8" width="1.6" height="1.6" fill="#8c8ea8"/><rect x="11.65" y="1.6" width="1.6" height="1.6" fill="#fff"/><rect x="10.85" y="0.8" width="1.6" height="1.6" fill="#8c8ea8"/><rect x="15.00" y="1.6" width="1.6" height="1.6" fill="#fff"/><rect x="14.20" y="0.8" width="1.6" height="1.6" fill="#8c8ea8"/><rect x="18.35" y="1.6" width="1.6" height="1.6" fill="#fff"/><rect x="17.55" y="0.8" width="1.6" height="1.6" fill="#8c8ea8"/><rect x="21.70" y="1.6" width="1.6" height="1.6" fill="#fff"/><rect x="20.90" y="0.8" width="1.6" height="1.6" fill="#8c8ea8"/></svg>
<svg class="ic" style="left:3.9px;top:70.4px" width="21.2" height="21.2" viewBox="0 0 20 20"><g stroke="#a4a7ba" stroke-width="1.1" stroke-linejoin="round" stroke-linecap="round" fill="#c9cbd9"><path d="M2 15 H8 V6 Q8 4 10 4 H15 Q17 4 17 6 V13 Q17 15 15 15 H8" /><rect x="11" y="7" width="4" height="5" fill="#dcdde8"/><path d="M2 15 V13" fill="none"/></g></svg>
<svg class="ic" style="left:3.9px;top:93.4px" width="21.2" height="21.2" viewBox="0 0 20 20"><g stroke="#a4a7ba" stroke-width="1.1" stroke-linejoin="round" stroke-linecap="round" fill="#c9cbd9"><path d="M3 6 H13 V15 H3 Z" fill="#c9cbd9"/><path d="M3 6 L6 3 H16 L13 6 Z" fill="#dcdde8"/><path d="M13 6 L16 3 V12 L13 15 Z" fill="#b9bbcd"/><rect x="11" y="12" width="6" height="6" fill="#b9bbcd"/><rect x="6" y="9" width="5" height="5" fill="#dcdde8"/></g></svg>
<svg class="ic" style="left:3.9px;top:116.4px" width="21.2" height="21.2" viewBox="0 0 20 20"><g stroke="#a4a7ba" stroke-width="1.1" stroke-linejoin="round" stroke-linecap="round" fill="#c9cbd9"><rect x="3" y="3" width="14" height="14" fill="#dcdde8"/><rect x="6" y="6" width="9" height="9" fill="#c9cbd9"/><rect x="8.5" y="8.5" width="4" height="4" fill="#b9bbcd"/></g></svg>
<svg class="ic" style="left:3.9px;top:139.4px" width="21.2" height="21.2" viewBox="0 0 20 20"><g stroke="#a4a7ba" stroke-width="1.1" stroke-linejoin="round" stroke-linecap="round" fill="#c9cbd9"><path d="M10 1.5 V18.5" fill="none" stroke-dasharray="3 1.5"/><ellipse cx="10" cy="10" rx="7" ry="2.6" fill="none"/><circle cx="4.5" cy="11" r="2" fill="#dcdde8"/><circle cx="15.5" cy="11" r="2" fill="#dcdde8"/></g></svg>
<svg class="ic" style="left:3.9px;top:162.4px" width="21.2" height="21.2" viewBox="0 0 20 20"><g stroke="#a4a7ba" stroke-width="1.1" stroke-linejoin="round" stroke-linecap="round" fill="#c9cbd9"><path d="M3 7 Q3 4 10 4 Q17 4 17 7 V15 Q17 17 13 17 V12 Q10 9 7 12 V17 Q3 17 3 15 Z"/><path d="M3 7 Q10 10 17 7" fill="none"/></g></svg>
<svg class="ic" style="left:3.9px;top:185.4px" width="21.2" height="21.2" viewBox="0 0 20 20"><g stroke="#a4a7ba" stroke-width="1.1" stroke-linejoin="round" stroke-linecap="round" fill="#c9cbd9"><path d="M17 4 H9 Q3 4 3 10 Q3 16 9 16 H17 V12.5 H10 Q7.5 12.5 7.5 10 Q7.5 7.5 10 7.5 H17 Z"/></g></svg>
<svg class="ic" style="left:3.9px;top:208.4px" width="21.2" height="21.2" viewBox="0 0 20 20"><g stroke="#a4a7ba" stroke-width="1.1" stroke-linejoin="round" stroke-linecap="round" fill="#c9cbd9"><path d="M3 6 H14 V16 H3 Z" fill="#c9cbd9"/><path d="M3 6 L6 3 H17 L14 6 Z" fill="#dcdde8"/><path d="M14 6 L17 3 V13 L14 16 Z" fill="#b9bbcd"/><path d="M15 8 H10 Q7 8 7 11 Q7 14 10 14 H15 V12.5 H10.5 Q9 12.5 9 11 Q9 9.5 10.5 9.5 H15 Z" fill="#b9bbcd"/></g></svg>
<svg class="ic" style="left:3.9px;top:231.4px" width="21.2" height="21.2" viewBox="0 0 20 20"><g stroke="#a4a7ba" stroke-width="1.1" stroke-linejoin="round" stroke-linecap="round" fill="#c9cbd9"><path d="M8 2.5 H12 Q12.5 11 17 17 H3 Q7.5 11 8 2.5 Z"/><ellipse cx="10" cy="3" rx="2" ry="0.9" fill="#dcdde8"/></g></svg>
<svg class="ic" style="left:3.9px;top:254.4px" width="21.2" height="21.2" viewBox="0 0 20 20"><g stroke="#a4a7ba" stroke-width="1.1" stroke-linejoin="round" stroke-linecap="round" fill="#c9cbd9"><path d="M3 4 L8 6 V18 L3 15 Z" fill="#dcdde8"/><path d="M17 4 L12 6 V18 L17 15 Z" fill="#b9bbcd"/><path d="M8 6 Q10 10 9 18 M12 6 Q10 10 11 18" fill="none"/><path d="M3 4 L10 2.5 L17 4" fill="none"/></g></svg>
<svg class="ic" style="left:3.9px;top:277.4px" width="21.2" height="21.2" viewBox="0 0 20 20"><g stroke="#a4a7ba" stroke-width="1.1" stroke-linejoin="round" stroke-linecap="round" fill="#c9cbd9"><path d="M3 9 Q3 3 10 3 L17 7 V15 L11 18 L3 15 Z" fill="#c9cbd9"/><path d="M3 9 Q5 7 11 10 V18 M11 10 L17 7" fill="none"/><path d="M3 9 Q3 3 10 3 L17 7 L11 10 Q5 7 3 9" fill="#dcdde8"/></g></svg>
<svg class="ic" style="left:3.9px;top:300.4px" width="21.2" height="21.2" viewBox="0 0 20 20"><g stroke="#a4a7ba" stroke-width="1.1" stroke-linejoin="round" stroke-linecap="round" fill="#c9cbd9"><path d="M3 9 L8 3 L17 6 V14 L11 18 L3 15 Z" fill="#dcdde8"/><path d="M3 9 L11 11 V18 M11 11 L17 6 M8 3 L11 11" fill="none"/></g></svg>
<svg class="ic" style="left:3.9px;top:323.4px" width="21.2" height="21.2" viewBox="0 0 20 20"><g stroke="#a4a7ba" stroke-width="1.1" stroke-linejoin="round" stroke-linecap="round" fill="#c9cbd9"><path d="M3 6 H14 V16 H3 Z" fill="#c9cbd9"/><path d="M3 6 L6 3 H17 L14 6 Z" fill="#dcdde8"/><path d="M14 6 L17 3 V13 L14 16 Z" fill="#b9bbcd"/><rect x="6" y="9" width="8" height="7" fill="#b5b7c9"/></g></svg>
<svg class="ic" style="left:3.9px;top:346.4px" width="21.2" height="21.2" viewBox="0 0 20 20"><g stroke="#a4a7ba" stroke-width="1.1" stroke-linejoin="round" stroke-linecap="round" fill="#c9cbd9"><path d="M3 5 L12 3 L17 8 V16 L11 17 L3 9 Z" fill="#c9cbd9"/><path d="M3 5 L11 11 V17 M11 11 L17 8" fill="none"/><rect x="11" y="11" width="6" height="6" fill="#dcdde8" stroke="none"/></g></svg>
<svg class="ic" style="left:3.9px;top:369.4px" width="21.2" height="21.2" viewBox="0 0 20 20"><g stroke="#a4a7ba" stroke-width="1.1" stroke-linejoin="round" stroke-linecap="round" fill="#c9cbd9"><rect x="3" y="7" width="10" height="10" fill="#dcdde8"/><circle cx="8" cy="12" r="2.6" fill="#c9cbd9"/><path d="M11 2 L17 8 M14 2 L18 6 M12 5 l3 3" fill="none" stroke-width="0.9"/><path d="M3 4 h1 m2 0 h1 m2 0 h1" fill="none" stroke-width="0.9"/></g></svg>
<svg class="ic" style="left:3.9px;top:392.4px" width="21.2" height="21.2" viewBox="0 0 20 20"><g stroke="#a4a7ba" stroke-width="1.1" stroke-linejoin="round" stroke-linecap="round" fill="#c9cbd9"><path d="M3 6 Q3 3.5 10 3.5 Q17 3.5 17 6 V14 Q17 16.5 10 16.5 Q3 16.5 3 14 Z"/><ellipse cx="10" cy="6" rx="7" ry="2.5" fill="#dcdde8"/><path d="M6 10 V14 H8 M10 10 V14 H12 V10 Z M14 10 V14" fill="none" stroke-width="0.9"/></g></svg>
<svg class="ic" style="left:3.9px;top:415.4px" width="21.2" height="21.2" viewBox="0 0 20 20"><g stroke="#a4a7ba" stroke-width="1.1" stroke-linejoin="round" stroke-linecap="round" fill="#c9cbd9"><path d="M3 9 Q3 4 10 4 Q17 4 17 9 V14 Q17 16.5 10 16.5 Q3 16.5 3 14 Z"/><path d="M3 10 Q10 13 17 10" fill="none"/></g></svg>
<svg class="ic" style="left:3.9px;top:438.4px" width="21.2" height="21.2" viewBox="0 0 20 20"><g stroke="#a4a7ba" stroke-width="1.1" stroke-linejoin="round" stroke-linecap="round" fill="#c9cbd9"><path d="M2 11 H6 V18 H2 Z" fill="#c9cbd9"/><path d="M2 11 L4 9 H8 L6 11 Z" fill="#dcdde8"/><path d="M6 11 L8 9 V16 L6 18 Z" fill="#b9bbcd"/><path d="M7 6 H11 V18 H7 Z" fill="#c9cbd9"/><path d="M7 6 L9 4 H13 L11 6 Z" fill="#dcdde8"/><path d="M11 6 L13 4 V16 L11 18 Z" fill="#b9bbcd"/><path d="M12 9 H16 V18 H12 Z" fill="#c9cbd9"/><path d="M12 9 L14 7 H18 L16 9 Z" fill="#dcdde8"/><path d="M16 9 L18 7 V16 L16 18 Z" fill="#b9bbcd"/></g></svg>
<svg class="ic" style="left:3.9px;top:461.4px" width="21.2" height="21.2" viewBox="0 0 20 20"><g stroke="#a4a7ba" stroke-width="1.1" stroke-linejoin="round" stroke-linecap="round" fill="#c9cbd9"><path d="M2 7 H6 V18 H2 Z" fill="#c9cbd9"/><path d="M2 7 L4 5 H8 L6 7 Z" fill="#dcdde8"/><path d="M6 7 L8 5 V16 L6 18 Z" fill="#b9bbcd"/><path d="M8 5 H12 V13 H8 Z" fill="#c9cbd9"/><path d="M8 5 L10 3 H14 L12 5 Z" fill="#dcdde8"/><path d="M12 5 L14 3 V11 L12 13 Z" fill="#b9bbcd"/><path d="M12 10 H16 V18 H12 Z" fill="#c9cbd9"/><path d="M12 10 L14 8 H18 L16 10 Z" fill="#dcdde8"/><path d="M16 10 L18 8 V16 L16 18 Z" fill="#b9bbcd"/></g></svg>
<svg class="ic" style="left:3.9px;top:484.4px" width="21.2" height="21.2" viewBox="0 0 20 20"><g stroke="#a4a7ba" stroke-width="1.1" stroke-linejoin="round" stroke-linecap="round" fill="#c9cbd9"><path d="M6 5 H14 V12 H6 Z" fill="#c9cbd9"/><path d="M6 5 L9 2 H17 L14 5 Z" fill="#dcdde8"/><path d="M14 5 L17 2 V9 L14 12 Z" fill="#b9bbcd"/><path d="M2 11 H10 V18 H2 Z" fill="#c9cbd9"/><path d="M2 11 L5 8 H13 L10 11 Z" fill="#dcdde8"/><path d="M10 11 L13 8 V15 L10 18 Z" fill="#b9bbcd"/></g></svg>
<svg class="ic" style="left:3.9px;top:507.4px" width="21.2" height="21.2" viewBox="0 0 20 20"><g stroke="#a4a7ba" stroke-width="1.1" stroke-linejoin="round" stroke-linecap="round" fill="#c9cbd9"><path d="M3 6 H14 V16 H3 Z" fill="#c9cbd9"/><path d="M3 6 L6 3 H17 L14 6 Z" fill="#dcdde8"/><path d="M14 6 L17 3 V13 L14 16 Z" fill="#b9bbcd"/><path d="M5 12 H9 V9 H12 V15 H5 Z" fill="#b9bbcd"/></g></svg>
<svg class="ic" style="left:3.9px;top:530.4px" width="21.2" height="21.2" viewBox="0 0 20 20"><g stroke="#a4a7ba" stroke-width="1.1" stroke-linejoin="round" stroke-linecap="round" fill="#c9cbd9"><path d="M2 6 H8 V15 H2 Z" fill="#c9cbd9"/><path d="M2 6 L4 4 H10 L8 6 Z" fill="#dcdde8"/><path d="M8 6 L10 4 V13 L8 15 Z" fill="#b9bbcd"/><path d="M9 6 H15 V12 H9 Z" fill="#c9cbd9"/><path d="M9 6 L11 4 H17 L15 6 Z" fill="#dcdde8"/><path d="M15 6 L17 4 V10 L15 12 Z" fill="#b9bbcd"/><path d="M4 12 V16 H15 V12" fill="#dcdde8"/></g></svg>
<svg class="ic" style="left:3.9px;top:553.4px" width="21.2" height="21.2" viewBox="0 0 20 20"><g stroke="#a4a7ba" stroke-width="1.1" stroke-linejoin="round" stroke-linecap="round" fill="#c9cbd9"><path d="M3 6 H14 V16 H3 Z" fill="#c9cbd9"/><path d="M3 6 L6 3 H17 L14 6 Z" fill="#dcdde8"/><path d="M14 6 L17 3 V13 L14 16 Z" fill="#b9bbcd"/><path d="M3 12 Q6 8 9 12 T14 10" fill="none"/></g></svg>
<svg class="ic" style="left:3.9px;top:576.4px" width="21.2" height="21.2" viewBox="0 0 20 20"><g stroke="#a4a7ba" stroke-width="1.1" stroke-linejoin="round" stroke-linecap="round" fill="#c9cbd9"><path d="M3 6 H14 V16 H3 Z" fill="#c9cbd9"/><path d="M3 6 L6 3 H17 L14 6 Z" fill="#dcdde8"/><path d="M14 6 L17 3 V13 L14 16 Z" fill="#b9bbcd"/><circle cx="8.5" cy="12" r="3.2" fill="#b9bbcc"/></g></svg>
<svg class="ic" style="left:3.9px;top:599.4px" width="21.2" height="21.2" viewBox="0 0 20 20"><g stroke="#a4a7ba" stroke-width="1.1" stroke-linejoin="round" stroke-linecap="round" fill="#c9cbd9"><ellipse cx="4.5" cy="6" rx="1.7" ry="2.3" fill="#dcdde8"/><ellipse cx="4.5" cy="13" rx="1.7" ry="2.3" fill="#dcdde8"/><ellipse cx="10.0" cy="6" rx="1.7" ry="2.3" fill="#dcdde8"/><ellipse cx="10.0" cy="13" rx="1.7" ry="2.3" fill="#dcdde8"/><ellipse cx="15.5" cy="6" rx="1.7" ry="2.3" fill="#dcdde8"/><ellipse cx="15.5" cy="13" rx="1.7" ry="2.3" fill="#dcdde8"/></g></svg>
<svg class="ic" style="left:3.9px;top:622.4px" width="21.2" height="21.2" viewBox="0 0 20 20"><g fill="none" stroke="#a4a7ba" stroke-width="2.4" stroke-linecap="round"><path d="M4 6 Q4 3 8 4 Q11 5 10 9 Q9 13 13 13 Q17 13 16 5 M4 10 Q3 16 8 15"/></g></svg>
<svg class="ic" style="left:3.9px;top:645.4px" width="21.2" height="21.2" viewBox="0 0 20 20"><g stroke="#a4a7ba" stroke-width="1.1" stroke-linejoin="round" stroke-linecap="round" fill="#c9cbd9"><rect x="6" y="2" width="3" height="7" rx="1"/><rect x="11" y="2" width="3" height="7" rx="1"/><rect x="6" y="11" width="3" height="7" rx="1"/><rect x="11" y="11" width="3" height="7" rx="1"/><rect x="2" y="7" width="7" height="3" rx="1" fill="#dcdde8"/><rect x="11" y="10" width="7" height="3" rx="1" fill="#dcdde8"/></g></svg>
<svg class="ic" style="left:3.9px;top:668.4px" width="21.2" height="21.2" viewBox="0 0 20 20"><g stroke="#a4a7ba" stroke-width="1.1" stroke-linejoin="round" stroke-linecap="round" fill="#c9cbd9"><path d="M3 5 L6 3 H17 V15 L14 17 H3 Z" fill="#dcdde8"/><path d="M3 5 H14 V17 M14 5 L17 3 M9 5 V17 M11 5 V17" fill="none"/></g></svg>
<svg class="ic" style="left:3.9px;top:691.4px" width="21.2" height="21.2" viewBox="0 0 20 20"><g fill="none" stroke="#a4a7ba" stroke-width="2" stroke-linejoin="miter"><path d="M4 3 H10 L7 9 L16 11 V17 M4 3 V9"/></g></svg>
<svg class="ic" style="left:3.9px;top:714.4px" width="21.2" height="21.2" viewBox="0 0 20 20"><g fill="none" stroke="#a4a7ba" stroke-width="1.8"><ellipse cx="10" cy="6" rx="6.5" ry="2.8"/><ellipse cx="10" cy="10.5" rx="6.5" ry="2.8"/><path d="M4 14 Q9 19 17 14"/></g></svg>
<svg class="ic" style="left:3.9px;top:737.4px" width="21.2" height="21.2" viewBox="0 0 20 20"><g stroke="#a4a7ba" stroke-width="1.1" stroke-linejoin="round" stroke-linecap="round" fill="#c9cbd9"><path d="M4 7 H13 V16 H4 Z" fill="#c9cbd9"/><path d="M4 7 L7 4 H16 L13 7 Z" fill="#dcdde8"/><path d="M13 7 L16 4 V13 L13 16 Z" fill="#b9bbcd"/><circle cx="4" cy="7" r="1.8" fill="#dcdde8"/><circle cx="16" cy="4" r="1.8" fill="#dcdde8"/><circle cx="13" cy="16" r="1.8" fill="#dcdde8"/><circle cx="4" cy="16" r="1.8" fill="#dcdde8"/></g></svg>
<svg class="ic" style="left:3.9px;top:760.4px" width="21.2" height="21.2" viewBox="0 0 20 20"><g fill="none" stroke="#a4a7ba" stroke-width="1.8" stroke-linecap="round"><path d="M4 5 Q3 12 8 12 Q12 12 11 16 M11 16 Q16 14 16 5"/><circle cx="4" cy="4" r="1.6"/><circle cx="16" cy="4" r="1.6"/></g></svg>
<svg class="ic" style="left:3.9px;top:783.4px" width="21.2" height="21.2" viewBox="0 0 20 20"><g stroke="#a4a7ba" stroke-width="1.1" stroke-linejoin="round" stroke-linecap="round" fill="#c9cbd9"><path d="M3 8 L8 3 L17 12 L12 17 Z" fill="#dcdde8"/><path d="M2 4 l2 2 M15 17 l2 2" fill="none"/></g></svg>
<svg class="ic" style="left:3.9px;top:806.4px" width="21.2" height="21.2" viewBox="0 0 20 20"><g fill="none" stroke="#a4a7ba" stroke-width="2" stroke-dasharray="2.5 2" stroke-linecap="round"><path d="M3 4 L17 17"/></g></svg>
<svg class="ic" style="left:34.4px;top:70.4px" width="21.2" height="21.2" viewBox="0 0 20 20"><g stroke="#a4a7ba" stroke-width="1.1" stroke-linejoin="round" stroke-linecap="round" fill="#c9cbd9"><path d="M4 9 L9 7 L15 9 V15 L10 17.5 L4 15 Z"/><path d="M4 9 L10 11.5 V17.5 M10 11.5 L15 9" fill="none"/><path d="M6 6 Q8 1.5 13 3 M11 1.5 L13.5 3.2 L11.5 5.5" fill="none" stroke-width="1.3"/><circle cx="15" cy="6" r="2" fill="#dcdde8"/></g></svg>
<svg class="ic" style="left:34.4px;top:93.8px" width="21.2" height="21.2" viewBox="0 0 20 20"><g stroke="#a4a7ba" stroke-width="1.1" stroke-linejoin="round" stroke-linecap="round" fill="#c9cbd9"><path d="M6 5 L10 3 L13 4.5 V8 L17 10 V15 L12 17.5 L6 14 Z"/><path d="M6 5 L9.5 7 V11 L12 12.5 V17.5 M9.5 7 L13 4.5 M12 12.5 L17 10" fill="none"/><path d="M4 11 v6 M1.5 14 h5 M2.3 12 l3.5 4 M5.8 12 l-3.5 4" fill="none" stroke-width="0.8"/></g></svg>
<svg class="ic" style="left:34.4px;top:116.9px" width="21.2" height="21.2" viewBox="0 0 20 20"><g stroke="#a4a7ba" stroke-width="1.1" stroke-linejoin="round" stroke-linecap="round" fill="#c9cbd9"><path d="M5 6 L10 3.5 L17 7 V14 L12 17 L5 13 Z"/><path d="M5 6 L12 10 V17 M12 10 L17 7 M8.5 4.5 L15 8.5 M8 8 V11" fill="none"/><path d="M4 12 v6 M1.5 15 h5 M2.3 13 l3.5 4 M5.8 13 l-3.5 4" fill="none" stroke-width="0.8"/></g></svg>
<svg class="ic" style="left:34.4px;top:140.4px" width="21.2" height="21.2" viewBox="0 0 20 20"><g stroke="#a4a7ba" stroke-width="1.1" stroke-linejoin="round" stroke-linecap="round" fill="#c9cbd9"><path d="M3 6 L9 3 L17 7 V14 L11 17.5 L3 12 Z"/><path d="M3 6 L11 10.5 V17.5 M11 10.5 L17 7 M7 4 L14.5 8.5 V12" fill="none"/></g></svg>
<svg class="ic" style="left:35.0px;top:164.0px" width="20.0" height="20.0" viewBox="0 0 20 20"><path d="M3 5 L7 3 L11 5 V10 L7 12 L3 10 Z" fill="#f3d23a" stroke="#222" stroke-width="0.8"/><path d="M10 5 L14 3 L18 5 V10 L14 12 L10 10 Z" fill="#3a7fe0" stroke="#222" stroke-width="0.8"/><path d="M7 4 L10.5 2.5 L14 4 L10.5 6 Z" fill="#2eb82e" stroke="#222" stroke-width="0.6"/><circle cx="7" cy="14" r="3.2" fill="#e02020" stroke="#222" stroke-width="0.9"/><circle cx="14" cy="14" r="3.2" fill="#e02020" stroke="#222" stroke-width="0.9"/><circle cx="7" cy="14" r="1" fill="#fff"/><circle cx="14" cy="14" r="1" fill="#fff"/></svg>
<svg class="ic" style="left:34.4px;top:186.4px" width="21.2" height="21.2" viewBox="0 0 20 20"><g stroke="#a4a7ba" stroke-width="1.1" stroke-linejoin="round" stroke-linecap="round" fill="#c9cbd9"><path d="M4 5 L8 3 L14 6 V11 L10 13 L4 10 Z"/><path d="M4 5 L10 8 V13 M10 8 L14 6" fill="none"/><path d="M9 16.5 h1 m2 0 h1 m2 0 h1" fill="none" stroke-width="1.4"/></g></svg>
<svg class="ic" style="left:35.0px;top:210.0px" width="20.0" height="20.0" viewBox="0 0 20 20"><path d="M5 4 L14 14 Q16 17 13.5 17.5 Q12 17.5 10.5 15.5 L4.5 8 Q3 5.5 5 4.5 Q7 4 8.5 6 L13.5 12.5" fill="none" stroke="#1c1c22" stroke-width="1.8" stroke-linecap="round"/></svg>
<svg class="ic" style="left:34.4px;top:232.9px" width="21.2" height="21.2" viewBox="0 0 20 20"><g stroke="#a4a7ba" stroke-width="1.1" stroke-linejoin="round" stroke-linecap="round" fill="#c9cbd9"><rect x="3" y="5" width="13" height="12" fill="#dcdde8"/><path d="M8 2 L9.5 5 L13 4 L11.5 7.5 L15 9 L11.5 10 L12 14 L9 11.5 L6 14 L6.5 10 L3.5 8.5 L7 7.5 Z" fill="#c9cbd9"/></g></svg>
<div class="abs" style="left:36px;top:258px;width:19px;height:1px;background:#70738c;box-shadow:0 1px 0 #f8f8fc"></div>
<svg class="ic" style="left:34.4px;top:262.8px" width="21.2" height="21.2" viewBox="0 0 20 20"><g stroke="#a4a7ba" stroke-width="1.1" stroke-linejoin="round" stroke-linecap="round" fill="#c9cbd9"><circle cx="6" cy="6" r="3"/><path d="M8 9 L13 7 L18 9.5 V14.5 L13 17.5 L8 14 Z" fill="#dcdde8"/><path d="M8 9 L13 12 V17.5 M13 12 L18 9.5" fill="none"/><path d="M4 10 Q2 14 6 16 M9 3 Q13 1 15 5" fill="none" stroke-width="1.3"/></g></svg>
<div class="abs" style="left:36px;top:289px;width:19px;height:1px;background:#70738c;box-shadow:0 1px 0 #f8f8fc"></div>
<svg class="ic" style="left:34.4px;top:294.7px" width="21.2" height="21.2" viewBox="0 0 20 20"><g stroke="#55586a" stroke-width="1.1" stroke-linejoin="round" stroke-linecap="round" fill="#b9bbc9"><circle cx="7" cy="12" r="4.2" fill="#dcdde8"/><circle cx="7" cy="12" r="1.5" fill="#b9bbc9"/><circle cx="13.5" cy="7.5" r="4" fill="#dcdde8"/><circle cx="13.5" cy="7.5" r="1.4" fill="#b9bbc9"/><path d="M7 6.5 v1.5 M7 16 v1.5 M1.5 12 h1.5 M11 12 h1.5 M13.5 2.2 v1.4 M17.5 7.5 h1.4" fill="none" stroke-width="1.6"/></g></svg>
<div class="abs" style="left:36px;top:320px;width:19px;height:1px;background:#70738c;box-shadow:0 1px 0 #f8f8fc"></div>
<svg class="ic" style="left:34.4px;top:324.6px" width="21.2" height="21.2" viewBox="0 0 20 20"><g stroke="#a4a7ba" stroke-width="1.1" stroke-linejoin="round" stroke-linecap="round" fill="#c9cbd9"><rect x="3" y="3" width="13" height="10" fill="#dcdde8"/><path d="M3 5.5 H16" fill="none"/><path d="M7 9 L11 7.5 L17 10 V14.5 L13 17 L7 13.5 Z"/><path d="M7 9 L13 12 V17 M13 12 L17 10" fill="none"/></g></svg>
<div class="abs" style="left:36px;top:351px;width:19px;height:1px;background:#70738c;box-shadow:0 1px 0 #f8f8fc"></div>
<svg class="ic" style="left:34.4px;top:355.8px" width="21.2" height="21.2" viewBox="0 0 20 20"><g stroke="#a4a7ba" stroke-width="1.1" stroke-linejoin="round" stroke-linecap="round" fill="#c9cbd9"><path d="M3 17 V13 H7 V10 H11 V7 H16 V11 H13 V14 H9 V17 Z"/><path d="M5 3 L10 7 M10 7 L9.5 4.5 M10 7 L7.5 7" fill="none" stroke-width="1.3"/><path d="M12 3 h4 v3" fill="none" stroke-dasharray="1.5 1"/></g></svg>
<svg class="ic" style="left:34.4px;top:379.3px" width="21.2" height="21.2" viewBox="0 0 20 20"><g stroke="#a4a7ba" stroke-width="1.1" stroke-linejoin="round" stroke-linecap="round" fill="#c9cbd9"><path d="M3 17 V13 H7 V10 H11 V7 H16 V11 H13 V14 H9 V17 Z"/><path d="M4 3 L9 8 M9 8 L8.5 5.2 M9 8 L6.2 7.7" fill="none" stroke-width="1.5"/></g></svg>
<div class="abs" style="left:36px;top:405px;width:19px;height:1px;background:#70738c;box-shadow:0 1px 0 #f8f8fc"></div>
<svg class="ic" style="left:34.4px;top:409.9px" width="21.2" height="21.2" viewBox="0 0 20 20"><g stroke="#a4a7ba" stroke-width="1.1" stroke-linejoin="round" stroke-linecap="round" fill="#c9cbd9"><circle cx="6" cy="6" r="3"/><path d="M8 9 L13 7 L18 9.5 V14.5 L13 17.5 L8 14 Z" fill="#dcdde8"/><path d="M8 9 L13 12 V17.5 M13 12 L18 9.5" fill="none"/><path d="M4 10 Q2 14 6 16 M9 3 Q13 1 15 5" fill="none" stroke-width="1.3"/></g></svg>
<svg class="ic" style="left:34.4px;top:434.0px" width="21.2" height="21.2" viewBox="0 0 20 20"><g stroke="#a4a7ba" stroke-width="1.1" stroke-linejoin="round" stroke-linecap="round" fill="#c9cbd9"><path d="M2 6 H8 V16 H2 Z" fill="#c9cbd9"/><path d="M2 6 L4 4 H10 L8 6 Z" fill="#dcdde8"/><path d="M8 6 L10 4 V14 L8 16 Z" fill="#b9bbcd"/><path d="M11 6 H16 V16 H11 Z" fill="#c9cbd9"/><path d="M11 6 L13 4 H18 L16 6 Z" fill="#dcdde8"/><path d="M16 6 L18 4 V14 L16 16 Z" fill="#b9bbcd"/><path d="M9.5 1.5 V18.5" fill="none" stroke-dasharray="2 1.2"/></g></svg>
<svg class="ic" style="left:34.4px;top:457.1px" width="21.2" height="21.2" viewBox="0 0 20 20"><g stroke="#a4a7ba" stroke-width="1.1" stroke-linejoin="round" stroke-linecap="round" fill="#c9cbd9"><path d="M2 6 H7 V16 H2 Z" fill="#c9cbd9"/><path d="M2 6 L4 4 H9 L7 6 Z" fill="#dcdde8"/><path d="M7 6 L9 4 V14 L7 16 Z" fill="#b9bbcd"/><path d="M10 6 H16 V16 H10 Z" fill="#c9cbd9"/><path d="M10 6 L12 4 H18 L16 6 Z" fill="#dcdde8"/><path d="M16 6 L18 4 V14 L16 16 Z" fill="#b9bbcd"/><path d="M5 10 h4 M12 14 h3" fill="none" stroke-width="1.6"/></g></svg>
<svg class="ic" style="left:34.4px;top:480.1px" width="21.2" height="21.2" viewBox="0 0 20 20"><g stroke="#a4a7ba" stroke-width="1.1" stroke-linejoin="round" stroke-linecap="round" fill="#c9cbd9"><path d="M5 7 L11 4 L17 7 V14 L11 17.5 L5 14 Z" fill="#dcdde8"/><path d="M5 7 L11 10 V17.5 M11 10 L17 7" fill="none"/><path d="M3 3 L9 8 L6.5 9 L11 14 L5 10.5 L7.5 9.5 Z" fill="#c9cbd9"/></g></svg>
<svg class="ic" style="left:34.4px;top:503.2px" width="21.2" height="21.2" viewBox="0 0 20 20"><g stroke="#a4a7ba" stroke-width="1.1" stroke-linejoin="round" stroke-linecap="round" fill="#c9cbd9"><path d="M3 3 H13 V6 H10 V9 H6 V6 H3 Z"/><path d="M3 17 V14 H6 V11 H10 V14 H13 V17 Z"/><path d="M15.5 3 V8 M14 6.5 L15.5 8.5 L17 6.5 M15.5 17 V12 M14 13.5 L15.5 11.5 L17 13.5 M13 10 H18" fill="none" stroke-width="1"/></g></svg>
<svg class="ic" style="left:34.4px;top:526.2px" width="21.2" height="21.2" viewBox="0 0 20 20"><g stroke="#a4a7ba" stroke-width="1.1" stroke-linejoin="round" stroke-linecap="round" fill="#c9cbd9"><path d="M2 6 H8 V16 H2 Z" fill="#c9cbd9"/><path d="M2 6 L4 4 H10 L8 6 Z" fill="#dcdde8"/><path d="M8 6 L10 4 V14 L8 16 Z" fill="#b9bbcd"/><path d="M11 6 H16 V16 H11 Z" fill="#c9cbd9"/><path d="M11 6 L13 4 H18 L16 6 Z" fill="#dcdde8"/><path d="M16 6 L18 4 V14 L16 16 Z" fill="#b9bbcd"/><path d="M9.5 1.5 V18.5" fill="none" stroke-dasharray="2 1.2"/></g></svg>
<div class="abs" style="left:34px;top:548px;width:23px;height:23px;border:1px solid #6a6d8c;border-radius:4px;background:#b5b7d6;box-sizing:border-box"></div>
<svg class="ic" style="left:35.0px;top:549.5px" width="20.0" height="20.0" viewBox="0 0 20 20"><path d="M2.5 5 H6 V8.3 H9.5 V11.7 H6 V15 H2.5 Z" fill="#f7dc1c" stroke="#6a5a08" stroke-width="0.8"/><path d="M8.5 4.8 L13 3.6 L18.6 9.2 L15.2 14.6 L8.8 15.6 Q12.5 10 8.5 4.8 Z" fill="#fff" stroke="#1c1c24" stroke-width="1.1" stroke-linejoin="round"/><path d="M9.8 6 Q14.5 10 9.8 14.6" fill="none" stroke="#3a3a44" stroke-width="1.8"/></svg>
<svg class="ic" style="left:35.0px;top:573.0px" width="20.0" height="20.0" viewBox="0 0 20 20"><path d="M5 7 Q10 1.5 16 5.5 L17.5 4 V9.5 H12 L13.8 7.8 Q10 5 7 8.5 Z M15 13 Q10 18.5 4 14.5 L2.5 16 V10.5 H8 L6.2 12.2 Q10 15 13 11.5 Z" fill="#2a78e4" stroke="#1048a0" stroke-width="0.5"/><path d="M3.5 8.5 L8 6.5 L10.5 8 L13 7 L16.5 9.5 L16.5 12 L13.5 13.5 L11 12.5 L11 14.5 L8 16 L5.5 14.5 L5.5 11.5 L3.5 10.5 Z" fill="#f7dc1c" stroke="#4a3a04" stroke-width="0.9" stroke-linejoin="round"/><path d="M3.5 8.5 L6 10 L8.5 9 L11 10.5 L13.5 9.5 L16.5 9.5 M8.5 9 V12 M11 10.5 V12.5" fill="none" stroke="#4a3a04" stroke-width="0.6"/></svg>
<svg class="ic" style="left:34.4px;top:595.4px" width="21.2" height="21.2" viewBox="0 0 20 20"><g stroke="#a4a7ba" stroke-width="1.1" stroke-linejoin="round" stroke-linecap="round" fill="#c9cbd9"><path d="M7 8 L12 5.5 L17 8 V13 L12 16 L7 13 Z" fill="#dcdde8"/><path d="M7 8 L12 10.5 V16 M12 10.5 L17 8" fill="none"/><path d="M2 9 h4 M2 12 h5 M2 15 h6" fill="none" stroke-width="1.3"/></g></svg>
<svg class="ic" style="left:34.4px;top:617.5px" width="21.2" height="21.2" viewBox="0 0 20 20"><g stroke="#a4a7ba" stroke-width="1.1" stroke-linejoin="round" stroke-linecap="round" fill="#c9cbd9"><path d="M3 7 L9 3.5 L17 6 V14 L11 17.5 L3 15 Z" fill="#dcdde8"/><path d="M3 7 L11 9.5 V17.5 M11 9.5 L17 6" fill="none"/><rect x="4.5" y="9.5" width="5" height="5" fill="#f2f2f6"/><path d="M7 10.5 v3 M5.5 12 h3" fill="none" stroke-width="1.2"/></g></svg>
<svg class="ic" style="left:34.4px;top:640.9px" width="21.2" height="21.2" viewBox="0 0 20 20"><g stroke="#a4a7ba" stroke-width="1.1" stroke-linejoin="round" stroke-linecap="round" fill="#c9cbd9"><path d="M4 3 h5 v2 h-1.5 v3 h-2 v-3 h-1.5 Z"/><path d="M11 3 h5 v2 h-1.5 v3 h-2 v-3 h-1.5 Z"/><path d="M4 11 h5 v2 h-1.5 v3 h-2 v-3 h-1.5 Z"/><path d="M11 11 h5 v2 h-1.5 v3 h-2 v-3 h-1.5 Z"/></g></svg>
<svg class="ic" style="left:34.4px;top:663.7px" width="21.2" height="21.2" viewBox="0 0 20 20"><g stroke="#a4a7ba" stroke-width="1.1" stroke-linejoin="round" stroke-linecap="round" fill="#c9cbd9"><path d="M8 2 h4 v3 h-1 v2 h-2 v-2 h-1 Z M8 18 h4 v-3 h-1 v-2 h-2 v2 h-1 Z M2 8 v4 h3 v-1 h2 v-2 h-2 v-1 Z M18 8 v4 h-3 v-1 h-2 v-2 h2 v-1 Z"/></g></svg>
<svg class="ic" style="left:34.4px;top:686.7px" width="21.2" height="21.2" viewBox="0 0 20 20"><g stroke="#a4a7ba" stroke-width="1.1" stroke-linejoin="round" stroke-linecap="round" fill="#c9cbd9"><path d="M4 2 h5 v2 h-1.5 v3 h-2 v-3 h-1.5 Z"/><path d="M11 2 h5 v2 h-1.5 v3 h-2 v-3 h-1.5 Z"/><rect x="3" y="9" width="5" height="4"/><rect x="6" y="12.5" width="11" height="4.5" rx="2.2" fill="#dcdde8"/><rect x="8.5" y="14" width="6" height="1.5" rx="0.7" fill="#c9cbd9"/></g></svg>
<svg class="ic" style="left:34.4px;top:709.5px" width="21.2" height="21.2" viewBox="0 0 20 20"><g stroke="#a4a7ba" stroke-width="1.1" stroke-linejoin="round" stroke-linecap="round" fill="#c9cbd9"><path d="M10 2 V18" fill="none" stroke-width="1.3"/><rect x="3" y="6" width="5" height="9"/><rect x="12" y="6" width="5" height="9" fill="#dcdde8"/><path d="M5 4 h2 M13 4 h2" fill="none"/></g></svg>
<div class="abs" style="left:36px;top:736px;width:19px;height:1px;background:#70738c;box-shadow:0 1px 0 #f8f8fc"></div>
<svg class="ic" style="left:34.4px;top:740.6px" width="21.2" height="21.2" viewBox="0 0 20 20"><g stroke="#a4a7ba" stroke-width="1.1" stroke-linejoin="round" stroke-linecap="round" fill="#c9cbd9"><path d="M4 4 L8 3 L9 6 L12 5 L13 8 L16 7 V11 L6 8 Z" fill="#dcdde8"/><path d="M3 9 L14 15 M14 15 L11 14.8 M14 15 L13 12.2" fill="none" stroke-width="1.8"/></g></svg>
<svg class="ic" style="left:66.5px;top:71.5px" width="19.0" height="19.0" viewBox="0 0 20 20"><g fill="none" stroke="#73768a" stroke-width="1.8" stroke-linecap="round" stroke-linejoin="round"><path d="M3 4 V15 Q3 17 5 17 H17"/><path d="M6 9 L16 4" stroke-width="1"/></g></svg>
<svg class="ic" style="left:66.5px;top:94.5px" width="19.0" height="19.0" viewBox="0 0 20 20"><g fill="none" stroke="#73768a" stroke-width="1.8" stroke-linecap="round" stroke-linejoin="round"><path d="M3 17 H15 M3 17 V12"/><path d="M7 12 L16 6" stroke-width="1"/><path d="M3 4 h2 v2 h-2 m4 -2 v4 h2 v-4" stroke-width="0.8"/></g></svg>
<svg class="ic" style="left:66.5px;top:117.6px" width="19.0" height="19.0" viewBox="0 0 20 20"><g fill="none" stroke="#73768a" stroke-width="1.8" stroke-linecap="round" stroke-linejoin="round"><path d="M4 11 L11 4 L16 9 L9 16 Z"/><path d="M12 3 L15 2" stroke-width="1"/></g></svg>
<svg class="ic" style="left:66.5px;top:140.6px" width="19.0" height="19.0" viewBox="0 0 20 20"><g fill="none" stroke="#73768a" stroke-width="1.8" stroke-linecap="round" stroke-linejoin="round"><path d="M3 3 L17 17"/></g></svg>
<svg class="ic" style="left:66.5px;top:163.7px" width="19.0" height="19.0" viewBox="0 0 20 20"><g fill="none" stroke="#73768a" stroke-width="1.8" stroke-linecap="round" stroke-linejoin="round" stroke-dasharray="3 2 1 2"><path d="M10 2 V18"/></g></svg>
<svg class="ic" style="left:66.5px;top:186.7px" width="19.0" height="19.0" viewBox="0 0 20 20"><g fill="none" stroke="#73768a" stroke-width="1.8" stroke-linecap="round" stroke-linejoin="round" stroke-width="1"><path d="M10 5 V15 M5.5 7 L14.5 13 M14.5 7 L5.5 13"/></g></svg>
<svg class="ic" style="left:66.5px;top:209.7px" width="19.0" height="19.0" viewBox="0 0 20 20"><g fill="none" stroke="#73768a" stroke-width="1.8" stroke-linecap="round" stroke-linejoin="round" stroke-width="1.1"><path d="M5 3 V13 L10 18 L15 13 V3 M8 3 V13 M12 3 V13" /></g></svg>
<svg class="ic" style="left:66.5px;top:232.8px" width="19.0" height="19.0" viewBox="0 0 20 20"><g fill="none" stroke="#73768a" stroke-width="1.8" stroke-linecap="round" stroke-linejoin="round"><rect x="3" y="5" width="14" height="11"/><circle cx="10" cy="10.5" r="0.8"/></g></svg>
<svg class="ic" style="left:66.5px;top:255.8px" width="19.0" height="19.0" viewBox="0 0 20 20"><g fill="none" stroke="#73768a" stroke-width="1.8" stroke-linecap="round" stroke-linejoin="round"><rect x="3" y="5" width="14" height="11"/></g></svg>
<svg class="ic" style="left:66.5px;top:278.9px" width="19.0" height="19.0" viewBox="0 0 20 20"><g fill="none" stroke="#73768a" stroke-width="1.8" stroke-linecap="round" stroke-linejoin="round"><circle cx="10" cy="10.5" r="6.5"/><path d="M10 10.5 L14 6" stroke-width="1"/></g></svg>
<svg class="ic" style="left:66.5px;top:301.9px" width="19.0" height="19.0" viewBox="0 0 20 20"><g fill="none" stroke="#73768a" stroke-width="1.8" stroke-linecap="round" stroke-linejoin="round" stroke-width="1.1"><path d="M5 10 Q10 2 15 10"/><circle cx="5" cy="13" r=".6"/><circle cx="8" cy="16" r=".6"/><circle cx="12" cy="16" r=".6"/><circle cx="15" cy="13" r=".6"/></g></svg>
<svg class="ic" style="left:66.5px;top:324.9px" width="19.0" height="19.0" viewBox="0 0 20 20"><g fill="none" stroke="#73768a" stroke-width="1.8" stroke-linecap="round" stroke-linejoin="round"><path d="M3 4 H9 L16 11 V17"/></g></svg>
<svg class="ic" style="left:66.5px;top:348.0px" width="19.0" height="19.0" viewBox="0 0 20 20"><g fill="none" stroke="#73768a" stroke-width="1.8" stroke-linecap="round" stroke-linejoin="round"><path d="M3 4 H9 Q16 4 16 11 V17"/><path d="M6 11 h4 m-2 -2 v4" stroke-width="0.9"/></g></svg>
<svg class="ic" style="left:66.5px;top:371.0px" width="19.0" height="19.0" viewBox="0 0 20 20"><g fill="none" stroke="#73768a" stroke-width="1.8" stroke-linecap="round" stroke-linejoin="round"><ellipse cx="10" cy="10.5" rx="8" ry="4" transform="rotate(-35 10 10.5)"/></g></svg>
<svg class="ic" style="left:66.5px;top:394.1px" width="19.0" height="19.0" viewBox="0 0 20 20"><g fill="none" stroke="#73768a" stroke-width="1.8" stroke-linecap="round" stroke-linejoin="round"><path d="M10 3 L17 10.5 L10 18 L3 10.5 Z" transform="rotate(15 10 10.5)"/></g></svg>
<svg class="ic" style="left:66.5px;top:417.1px" width="19.0" height="19.0" viewBox="0 0 20 20"><g fill="none" stroke="#73768a" stroke-width="1.8" stroke-linecap="round" stroke-linejoin="round"><path d="M10 3 L17 10.5 L10 18 L3 10.5 Z" transform="rotate(15 10 10.5)"/><circle cx="10" cy="10.5" r="0.8"/></g></svg>
<svg class="ic" style="left:66.5px;top:440.1px" width="19.0" height="19.0" viewBox="0 0 20 20"><g fill="none" stroke="#73768a" stroke-width="1.8" stroke-linecap="round" stroke-linejoin="round"><path d="M6 6 H18 L14 15 H2 Z"/></g></svg>
<svg class="ic" style="left:66.5px;top:463.2px" width="19.0" height="19.0" viewBox="0 0 20 20"><g fill="none" stroke="#73768a" stroke-width="1.8" stroke-linecap="round" stroke-linejoin="round"><rect x="2.5" y="6" width="15" height="9" rx="4.5"/><circle cx="7" cy="10.5" r=".8"/><circle cx="13" cy="10.5" r=".8"/></g></svg>
<svg class="ic" style="left:66.5px;top:486.2px" width="19.0" height="19.0" viewBox="0 0 20 20"><g fill="none" stroke="#73768a" stroke-width="1.8" stroke-linecap="round" stroke-linejoin="round"><path d="M3 14 Q3 5 12 4 Q18 4 16 8 Q14 10 11 10 Q9 16 5 17 Q3 17 3 14 Z"/></g></svg>
<svg class="ic" style="left:66.5px;top:509.3px" width="19.0" height="19.0" viewBox="0 0 20 20"><g fill="none" stroke="#73768a" stroke-width="1.8" stroke-linecap="round" stroke-linejoin="round"><path d="M6 4 H14 L18 10.5 L14 17 H6 L2 10.5 Z"/><path d="M8 10.5 h4 m-2 -2 v4" stroke-width="0.9"/></g></svg>
<svg class="ic" style="left:66.5px;top:532.3px" width="19.0" height="19.0" viewBox="0 0 20 20"><g fill="none" stroke="#73768a" stroke-width="1.8" stroke-linecap="round" stroke-linejoin="round"><path d="M4 3 Q4 17 10 17 Q16 17 16 3"/></g></svg>
<svg class="ic" style="left:66.5px;top:555.3px" width="19.0" height="19.0" viewBox="0 0 20 20"><g fill="none" stroke="#73768a" stroke-width="1.8" stroke-linecap="round" stroke-linejoin="round"><path d="M3 16 Q3 6 7 6 Q11 6 11 11 Q11 16 14 16 Q17 16 17 5"/></g></svg>
<svg class="ic" style="left:66.5px;top:578.4px" width="19.0" height="19.0" viewBox="0 0 20 20"><g fill="none" stroke="#73768a" stroke-width="1.8" stroke-linecap="round" stroke-linejoin="round" stroke-width="2.2"><path d="M4 3 V16 H17"/><path d="M6 6 Q7 14 15 14.5" stroke-width="1"/></g></svg>
<svg class="ic" style="left:66.5px;top:601.4px" width="19.0" height="19.0" viewBox="0 0 20 20"><g fill="none" stroke="#73768a" stroke-width="1.8" stroke-linecap="round" stroke-linejoin="round"><path d="M3 4 Q10 2 17 4 Q15 10 17 17 Q10 19 3 17 Q5 10 3 4 Z"/><path d="M6 13 Q8 7 11 11 T15 8" stroke-width="1"/></g></svg>
<svg class="ic" style="left:66.5px;top:624.5px" width="19.0" height="19.0" viewBox="0 0 20 20"><g fill="#73768a" stroke="none"><rect x="3" y="3.5" width="3.6" height="3.6"/><rect x="3" y="8.5" width="3.6" height="3.6"/><rect x="3" y="13.5" width="3.6" height="3.6"/><rect x="8" y="3.5" width="3.6" height="3.6"/><rect x="8" y="8.5" width="3.6" height="3.6"/><rect x="8" y="13.5" width="3.6" height="3.6"/><rect x="13" y="3.5" width="3.6" height="3.6"/><rect x="13" y="8.5" width="3.6" height="3.6"/><rect x="13" y="13.5" width="3.6" height="3.6"/></g></svg>
<svg class="ic" style="left:66.5px;top:647.5px" width="19.0" height="19.0" viewBox="0 0 20 20"><g fill="#73768a" stroke="none"><circle cx="10" cy="5" r="2"/><circle cx="5" cy="9.5" r="2"/><circle cx="15" cy="9.5" r="2"/><circle cx="7" cy="15.5" r="2"/><circle cx="13" cy="15.5" r="2"/></g></svg>
<div class="abs" style="left:67px;top:672px;width:22px;height:1px;background:#70738c;box-shadow:0 1px 0 #f8f8fc"></div>
<svg class="ic" style="left:66.5px;top:678.2px" width="19.0" height="19.0" viewBox="0 0 20 20"><g fill="none" stroke="#73768a" stroke-width="1.8" stroke-linecap="round" stroke-linejoin="round"><path d="M3 6 L7 3 H17 V14 L13 17 H3 Z M3 6 H13 V17 M13 6 L17 3"/></g></svg>
<svg class="ic" style="left:66.5px;top:701.0px" width="19.0" height="19.0" viewBox="0 0 20 20"><g fill="none" stroke="#73768a" stroke-width="1.8" stroke-linecap="round" stroke-linejoin="round" stroke-width="1.8"><path d="M3 4 H16 V8 L8 17 M3 8 H12 L5 16"/></g></svg>
<svg class="ic" style="left:66.5px;top:723.5px" width="19.0" height="19.0" viewBox="0 0 20 20"><g fill="none" stroke="#73768a" stroke-width="1.8" stroke-linecap="round" stroke-linejoin="round"><path d="M10 3 L17 16 H3 Z"/><path d="M10 8 V12 M10 14 V14.5" stroke-width="1.2"/></g></svg>
<svg class="ic" style="left:66.5px;top:746.9px" width="19.0" height="19.0" viewBox="0 0 20 20"><g fill="none" stroke="#73768a" stroke-width="1.8" stroke-linecap="round" stroke-linejoin="round" stroke-width="1.3"><path d="M3 8 H17 M10 3 V17 M5 4 L8 8 M15 4 L12 8 M4 13 H16"/></g></svg>
<svg class="ic" style="left:66.5px;top:770.2px" width="19.0" height="19.0" viewBox="0 0 20 20"><g fill="none" stroke="#73768a" stroke-width="1.8" stroke-linecap="round" stroke-linejoin="round" stroke-width="1.6"><path d="M9 3 V16 M3 16 H17 M9 10 H14 V16"/></g></svg>
<svg class="ic" style="left:66.5px;top:793.5px" width="19.0" height="19.0" viewBox="0 0 20 20"><g fill="none" stroke="#73768a" stroke-width="1.8" stroke-linecap="round" stroke-linejoin="round" stroke-width="1.2"><path d="M3 16 H17 M6 16 V8 Q9 4 10 9 V16 M13 4 L11 12"/></g></svg>
<svg class="ic" style="left:66.5px;top:814.5px" width="19.0" height="19.0" viewBox="0 0 20 20"><g fill="none" stroke="#73768a" stroke-width="1.8" stroke-linecap="round" stroke-linejoin="round" stroke-width="1.2"><path d="M3 8 H17 M6 4 V12 M14 4 V12 M10 2 V14"/></g></svg>
<div class="abs" style="left:90px;top:56px;width:349px;height:767px;background:#e3e5ee"></div>
<div class="abs" style="left:90px;top:56px;width:346px;height:2px;background:#c5c7da;border-bottom:1px solid #9c9eb4"></div>
<div class="abs" style="left:90px;top:59px;width:346px;height:23px;background:#ccd0e6;border-bottom:1px solid #9a9cb2"></div>
<div class="abs" style="left:90px;top:83px;width:346px;height:3px;background:#eceef6"></div>
<div class="abs" style="left:434.8px;top:56px;width:3.2px;height:767px;background:#f1f2f8"></div>
<div class="abs" style="left:438px;top:56px;width:1.2px;height:767px;background:#5e627c"></div>
<div class="abs" style="left:90px;top:61px;width:24px;height:21px;background:#c3c6dc;border:1px solid #a8abc2;border-bottom:none;border-radius:4px 4px 0 0;box-sizing:border-box"></div>
<div class="abs" style="left:116.5px;top:61px;width:26.5px;height:23px;background:#e9ebf3;border:1px solid #a8abc2;border-bottom:none;border-radius:4px 4px 0 0;box-sizing:border-box"></div>
<div class="abs" style="left:145px;top:61px;width:25.5px;height:21px;background:#c3c6dc;border:1px solid #a8abc2;border-bottom:none;border-radius:4px 4px 0 0;box-sizing:border-box"></div>
<svg class="ic" style="left:91.7px;top:61.7px" width="19.6" height="19.6" viewBox="0 0 20 20"><g stroke="#111" stroke-width="0.9" stroke-linejoin="round"><path d="M1.9 6.6 L6.5 3.4 L9 5 L8.8 10.1 L13.4 12.7 L16.8 11.2 L16.8 15 L11.5 17.7 L1.9 8.9 Z" fill="#fff3a0"/><path d="M1.9 6.6 L11.7 14.8 L11.5 17.7 L1.9 8.9 Z" fill="#f5d21a"/><path d="M11.7 14.8 L16.8 12 L16.8 15 L11.5 17.7 Z" fill="#f5b042"/><path d="M8.8 4.7 L13 2.4 L17.6 5.5 L13.4 7.8 Z" fill="#7be08a" stroke="#0a5a18"/><path d="M8.8 4.7 L13.4 7.8 L13.4 12.7 L8.8 10.1 Z" fill="#12b030" stroke="#0a5a18"/><path d="M13.4 7.8 L17.6 5.5 L17.6 10.4 L13.4 12.7 Z" fill="#0c8a24" stroke="#0a5a18"/></g></svg>
<svg class="ic" style="left:120.5px;top:62.5px" width="19.0" height="19.0" viewBox="0 0 20 20"><rect x="3.5" y="6" width="10.5" height="12" fill="#fff" stroke="#222" stroke-width="1.1"/><path d="M5.5 9.5 H12 M5.5 11.5 H12 M5.5 13.5 H12 M5.5 15.5 H12" stroke="#4a8ae0" stroke-width="1"/><path d="M9 7 L13 2.5 L17.5 3.5 L18 6.5 L14.5 8.5 Z" fill="#e8b070" stroke="#6a4010" stroke-width="0.8"/></svg>
<svg class="ic" style="left:148.5px;top:62.0px" width="19.0" height="19.0" viewBox="0 0 20 20"><path d="M4.5 2 V16.5 M4.5 6 H9 M4.5 14 H11" stroke="#333" stroke-width="1.2" fill="none"/><rect x="9" y="3" width="6" height="6" rx="1" fill="#f5d21a" stroke="#222" stroke-width="1"/><rect x="11" y="11" width="6" height="6" rx="1" fill="#f5d21a" stroke="#222" stroke-width="1"/></svg>
<div class="abs" style="left:90px;top:86px;width:344px;height:22px;box-sizing:border-box;border:1px solid #2a2c4c;border-top-color:#8e91ae;border-left-color:#8e91ae;background:linear-gradient(#9a9db8 0%,#8285a4 25%,#75789a 55%,#8b8eab 80%,#9ea1ba 100%)"></div>
<svg class="ic" style="left:90.0px;top:87.8px" width="18.4" height="18.4" viewBox="0 0 20 20"><path d="M2.5 5 H6 V8.3 H9.5 V11.7 H6 V15 H2.5 Z" fill="#f7dc1c" stroke="#6a5a08" stroke-width="0.8"/><path d="M8.5 4.8 L13 3.6 L18.6 9.2 L15.2 14.6 L8.8 15.6 Q12.5 10 8.5 4.8 Z" fill="#fff" stroke="#1c1c24" stroke-width="1.1" stroke-linejoin="round"/><path d="M9.8 6 Q14.5 10 9.8 14.6" fill="none" stroke="#3a3a44" stroke-width="1.8"/></svg>
<span class="t" style="left:110.7px;top:91.10px;font-size:13px;font-weight:bold;color:#fff;letter-spacing:-0.211px;">Komponente verschieben</span>
<span class="t" style="left:418.6px;top:90.50px;font-size:13px;font-weight:bold;color:#fff;letter-spacing:0.000px;">?</span>
<svg class="ic" style="left:91px;top:114px" width="18" height="15" viewBox="0 0 18 15"><path d="M1.5 8 L4 6 L7 9.5 L15 1.5 L17 3.5 L7 13.5 Z" fill="#2fc42f" stroke="#127a12" stroke-width="0.9" stroke-linejoin="round"/></svg>
<div class="sec" style="top:143px;height:83px"><div class="sh"></div></div><span class="t" style="left:96.3px;top:147.69px;font-size:11px;font-weight:bold;color:#34374f;letter-spacing:-0.293px;">Verschieben</span><svg class="ic" style="left:417.5px;top:148px" width="9" height="10" viewBox="0 0 9 10"><path d="M1 5 L4.5 1.5 L8 5 M1 9 L4.5 5.5 L8 9" fill="none" stroke="#3a3e56" stroke-width="1.6"/></svg>
<div class="sec" style="top:233px;height:20px"><div class="sh"></div></div><span class="t" style="left:96.3px;top:237.69px;font-size:11px;font-weight:bold;color:#34374f;letter-spacing:-0.161px;">Drehen</span><svg class="ic" style="left:417.5px;top:238px" width="9" height="10" viewBox="0 0 9 10"><path d="M1 1.5 L4.5 5 L8 1.5 M1 5.5 L4.5 9 L8 5.5" fill="none" stroke="#3a3e56" stroke-width="1.6"/></svg>
<div class="sec" style="top:265px;height:373.6px"><div class="sh"></div></div><span class="t" style="left:96.3px;top:269.69px;font-size:11px;font-weight:bold;color:#34374f;letter-spacing:-0.012px;">Optionen</span><svg class="ic" style="left:417.5px;top:270px" width="9" height="10" viewBox="0 0 9 10"><path d="M1 5 L4.5 1.5 L8 5 M1 9 L4.5 5.5 L8 9" fill="none" stroke="#3a3e56" stroke-width="1.6"/></svg>
<div class="sec" style="top:646px;height:20px"><div class="sh"></div></div><span class="t" style="left:113.4px;top:650.69px;font-size:11px;font-weight:bold;color:#34374f;letter-spacing:-0.164px;">Dynamischer Abstand</span><svg class="ic" style="left:417.5px;top:651px" width="9" height="10" viewBox="0 0 9 10"><path d="M1 1.5 L4.5 5 L8 1.5 M1 5.5 L4.5 9 L8 5.5" fill="none" stroke="#3a3e56" stroke-width="1.6"/></svg><div class="cb" style="left:96.5px;top:650px;width:10px;height:10px"></div>
<div class="sec" style="top:677.8px;height:114.5px"><div class="sh"></div></div><span class="t" style="left:96.3px;top:682.49px;font-size:11px;font-weight:bold;color:#34374f;letter-spacing:-0.063px;">Erweiterte Optionen</span><svg class="ic" style="left:417.5px;top:682.8px" width="9" height="10" viewBox="0 0 9 10"><path d="M1 5 L4.5 1.5 L8 5 M1 9 L4.5 5.5 L8 9" fill="none" stroke="#3a3e56" stroke-width="1.6"/></svg>
<div class="abs" style="left:96px;top:166px;width:23.5px;height:22.5px;border:1px solid #8a8c9e;border-radius:4px;background:linear-gradient(#fafafc,#e2e3ea);box-sizing:border-box"></div>
<svg class="ic" style="left:98.5px;top:167.5px" width="19.0" height="19.0" viewBox="0 0 20 20"><path d="M4 5 L13 15 Q15 17.5 12.5 18 Q11 18 9.5 16 L3.5 8.5 Q2 6 4 5 Q6 4.5 7.5 6.5 L12.5 13" fill="none" stroke="#1c1c22" stroke-width="1.7" stroke-linecap="round"/><path d="M13.5 2.5 L15 6 L18.5 6.5 L16 9 L16.5 12.5 L13.5 10.8 L10.5 12.5 L11 9 L8.5 6.5 L12 6 Z" fill="#f5e23a" stroke="#a89010" stroke-width="0.6"/></svg>
<span class="t" style="left:124px;top:173.49px;font-size:11px;font-weight:normal;color:#30334a;letter-spacing:0.537px;">Intelligente Verknüpfungen</span>
<svg class="ic" style="left:102.5px;top:198.5px" width="16" height="16" viewBox="0 0 16 16"><path d="M8 1 V15 M1 8 H15" stroke="#000" stroke-width="1.3"/><path d="M8 0 L5.5 3.2 H10.5 Z M8 16 L5.5 12.8 H10.5 Z M0 8 L3.2 5.5 V10.5 Z M16 8 L12.8 5.5 V10.5 Z" fill="#000"/></svg>
<div class="abs" style="left:126px;top:197.5px;width:297px;height:19.5px;background:#fff;border:1px solid;border-color:#3c3c44 #e9e9ef #e9e9ef #3c3c44;box-shadow:inset 1px 1px 0 #3c3c44, 0 0 0 0.5px #b0b2c0;box-sizing:border-box"></div>
<div class="abs" style="left:406px;top:199.5px;width:15px;height:15.5px;background:#d6d3ce;border:1px solid;border-color:#fff #404040 #404040 #fff;box-sizing:border-box"></div>
<svg class="ic" style="left:409.5px;top:205px" width="7" height="4" viewBox="0 0 7 4"><path d="M0 0 H7 L3.5 4 Z" fill="#000"/></svg>
<span class="t" style="left:130.5px;top:202.89px;font-size:11px;font-weight:normal;color:#30334a;letter-spacing:-0.014px;">Freies Ziehen</span>
<svg class="ic" style="left:113.5px;top:288.5px" width="12" height="12" viewBox="0 0 12 12"><circle cx="6" cy="6" r="4.7" fill="#fbfbfd"/><path d="M2.3 9.3 A4.9 4.9 0 0 1 9.5 2.5" fill="none" stroke="#2e2e36" stroke-width="1.5"/><path d="M9.9 2.9 A4.9 4.9 0 0 1 2.7 9.7" fill="none" stroke="#fff" stroke-width="1.2"/></svg>
<span class="t" style="left:131.3px;top:291.39px;font-size:11px;font-weight:normal;color:#30334a;letter-spacing:0.232px;">Standard-Ziehen</span>
<svg class="ic" style="left:113.5px;top:309.6px" width="12" height="12" viewBox="0 0 12 12"><circle cx="6" cy="6" r="4.7" fill="#fbfbfd"/><path d="M2.3 9.3 A4.9 4.9 0 0 1 9.5 2.5" fill="none" stroke="#2e2e36" stroke-width="1.5"/><path d="M9.9 2.9 A4.9 4.9 0 0 1 2.7 9.7" fill="none" stroke="#fff" stroke-width="1.2"/></svg>
<span class="t" style="left:131.3px;top:312.39px;font-size:11px;font-weight:normal;color:#30334a;letter-spacing:0.457px;">Kollisionsprüfung</span>
<svg class="ic" style="left:113.5px;top:330.2px" width="12" height="12" viewBox="0 0 12 12"><circle cx="6" cy="6" r="4.7" fill="#fbfbfd"/><path d="M2.3 9.3 A4.9 4.9 0 0 1 9.5 2.5" fill="none" stroke="#2e2e36" stroke-width="1.5"/><path d="M9.9 2.9 A4.9 4.9 0 0 1 2.7 9.7" fill="none" stroke="#fff" stroke-width="1.2"/><circle cx="6.1" cy="6.1" r="1.9" fill="#000"/></svg>
<span class="t" style="left:131.3px;top:333.69px;font-size:11px;font-weight:normal;color:#30334a;letter-spacing:0.046px;">Physikalische Dynamik</span>
<svg class="ic" style="left:113.5px;top:375.8px" width="12" height="12" viewBox="0 0 12 12"><circle cx="6" cy="6" r="4.7" fill="#fbfbfd"/><path d="M2.3 9.3 A4.9 4.9 0 0 1 9.5 2.5" fill="none" stroke="#2e2e36" stroke-width="1.5"/><path d="M9.9 2.9 A4.9 4.9 0 0 1 2.7 9.7" fill="none" stroke="#fff" stroke-width="1.2"/></svg>
<span class="t" style="left:131.3px;top:378.59px;font-size:11px;font-weight:normal;color:#30334a;letter-spacing:0.330px;">Allen Komponenten</span>
<svg class="ic" style="left:113.5px;top:396.6px" width="12" height="12" viewBox="0 0 12 12"><circle cx="6" cy="6" r="4.7" fill="#fbfbfd"/><path d="M2.3 9.3 A4.9 4.9 0 0 1 9.5 2.5" fill="none" stroke="#2e2e36" stroke-width="1.5"/><path d="M9.9 2.9 A4.9 4.9 0 0 1 2.7 9.7" fill="none" stroke="#fff" stroke-width="1.2"/><circle cx="6.1" cy="6.1" r="1.9" fill="#000"/></svg>
<span class="t" style="left:131.3px;top:399.79px;font-size:11px;font-weight:normal;color:#30334a;letter-spacing:0.271px;">Diesen Komponenten</span>
<span class="t" style="left:131.3px;top:356.59px;font-size:11px;font-weight:normal;color:#30334a;letter-spacing:0.156px;">Prüfen zwischen:</span>
<svg class="ic" style="left:99.0px;top:418.5px" width="18.0" height="18.0" viewBox="0 0 20 20"><g stroke="#111" stroke-width="1.5" stroke-linejoin="round"><path d="M2 5.5 L7 2.5 L13 3.5 L14.5 7.5 L18.5 11.5 V15.5 L12.5 18.5 L2 8.5 Z" fill="#f0d81e"/><path d="M2 5.5 L12.5 15 L18.5 11.5 L14.5 7.5 L10.5 9.5 L7 6.5 L7 2.5 Z" fill="#fbee5a" stroke-width="1"/><path d="M7 6.5 L10.5 9.5 L10.5 13 M12.5 15 V18.5" fill="none" stroke-width="1.1"/><path d="M12.5 15 L18.5 11.5 V15.5 L12.5 18.5 Z" fill="#d8a418" stroke-width="1"/></g></svg>
<div class="abs" style="left:126px;top:419.5px;width:297px;height:75px;background:#fff;border:1px solid #8d90a6;box-sizing:border-box"></div>
<div class="abs" style="left:129px;top:422.5px;width:291px;height:12.5px;background:#0a246a"></div>
<span class="t" style="left:131.3px;top:424.69px;font-size:11px;font-weight:normal;color:#fff;letter-spacing:-0.201px;">Chassi-1</span>
<span class="t" style="left:131.3px;top:437.59px;font-size:11px;font-weight:normal;color:#30334a;letter-spacing:-0.067px;">Riegel-1</span>
<span class="t" style="left:131.3px;top:450.59px;font-size:11px;font-weight:normal;color:#30334a;letter-spacing:-0.106px;">Schlüssel-1</span>
<div class="abs" style="left:185.5px;top:500.5px;width:148px;height:22px;border:1px solid #a8aabc;border-radius:4px;background:linear-gradient(#f4f4f8,#e6e7ee);box-sizing:border-box"></div>
<span class="t" style="left:192.4px;top:507.19px;font-size:11px;font-weight:normal;color:#a2a2aa;letter-spacing:0.336px;">Ziehen wieder aufnehmen</span>
<div class="cb" style="left:117px;top:531.7px;background:#d4d0c8;width:10px;height:10px"></div><svg class="ic" style="left:119.5px;top:534.2px" width="8" height="8" viewBox="0 0 8 8"><path d="M0.3 2.6 L2.8 5.1 L7.7 0.2 V3 L2.8 7.9 L0.3 5.4 Z" fill="#8a8880"/></svg>
<span class="t" style="left:135.7px;top:534.29px;font-size:11px;font-weight:normal;color:#77798a;letter-spacing:0.294px;">Stopp bei Kollision</span>
<div class="cb" style="left:117px;top:554.7px;background:#fff;width:10px;height:10px"></div>
<span class="t" style="left:135.7px;top:557.19px;font-size:11px;font-weight:normal;color:#30334a;letter-spacing:0.172px;">Nur gezogenes Teil</span>
<span class="t" style="left:152.7px;top:579.79px;font-size:11px;font-weight:normal;color:#30334a;letter-spacing:0.054px;">Sensitivität</span>
<span class="t" style="left:111.6px;top:595.99px;font-size:11px;font-weight:normal;color:#30334a;letter-spacing:0.683px;">Min</span>
<span class="t" style="left:397.4px;top:609.19px;font-size:11px;font-weight:normal;color:#30334a;letter-spacing:-0.215px;">Max.</span>
<div class="abs" style="left:140px;top:603px;width:247px;height:2px;background:#62646f;border-bottom:1px solid #fff;border-radius:1px"></div>
<svg class="ic" style="left:259.5px;top:596px" width="11" height="18" viewBox="0 0 11 18"><path d="M0.5 0.5 H9.5 V13 L5 17.5 L0.5 13 Z" fill="#d0cdc6" stroke="#fff" stroke-width="0.8"/><path d="M9.8 0.5 V13.2 L5 17.8" fill="none" stroke="#3a3a40" stroke-width="1.3"/></svg>
<div class="abs" style="left:145.0px;top:617.7px;width:1px;height:4px;background:#111"></div>
<div class="abs" style="left:168.7px;top:617.7px;width:1px;height:4px;background:#111"></div>
<div class="abs" style="left:192.4px;top:617.7px;width:1px;height:4px;background:#111"></div>
<div class="abs" style="left:216.1px;top:617.7px;width:1px;height:4px;background:#111"></div>
<div class="abs" style="left:239.8px;top:617.7px;width:1px;height:4px;background:#111"></div>
<div class="abs" style="left:263.5px;top:617.7px;width:1px;height:4px;background:#111"></div>
<div class="abs" style="left:287.2px;top:617.7px;width:1px;height:4px;background:#111"></div>
<div class="abs" style="left:310.9px;top:617.7px;width:1px;height:4px;background:#111"></div>
<div class="abs" style="left:334.6px;top:617.7px;width:1px;height:4px;background:#111"></div>
<div class="abs" style="left:358.3px;top:617.7px;width:1px;height:4px;background:#111"></div>
<div class="abs" style="left:382.0px;top:617.7px;width:1px;height:4px;background:#111"></div>
<div class="cb" style="left:105px;top:701.7px;background:#fff;width:10px;height:10px"></div><svg class="ic" style="left:107.5px;top:704.2px" width="8" height="8" viewBox="0 0 8 8"><path d="M0.3 2.6 L2.8 5.1 L7.7 0.2 V3 L2.8 7.9 L0.3 5.4 Z" fill="#000"/></svg>
<span class="t" style="left:123.4px;top:703.99px;font-size:11px;font-weight:normal;color:#30334a;letter-spacing:0.230px;">Flächen hervorheben</span>
<div class="cb" style="left:105px;top:725.2px;background:#fff;width:10px;height:10px"></div><svg class="ic" style="left:107.5px;top:727.7px" width="8" height="8" viewBox="0 0 8 8"><path d="M0.3 2.6 L2.8 5.1 L7.7 0.2 V3 L2.8 7.9 L0.3 5.4 Z" fill="#000"/></svg>
<span class="t" style="left:123.4px;top:726.79px;font-size:11px;font-weight:normal;color:#30334a;letter-spacing:0.225px;">Ton</span>
<div class="cb" style="left:105px;top:748.2px;background:#d4d0c8;width:10px;height:10px"></div>
<span class="t" style="left:123.4px;top:750.89px;font-size:11px;font-weight:normal;color:#77798a;letter-spacing:0.264px;">Komplexe Oberflächen ignorieren</span>
<div class="cb" style="left:105px;top:769.7px;background:#fff;width:10px;height:10px"></div>
<span class="t" style="left:123.4px;top:772.09px;font-size:11px;font-weight:normal;color:#30334a;letter-spacing:0.344px;">Diese Konfiguration</span>
<svg id="vp" viewBox="439 56 1059 767" width="1059" height="767" style="position:absolute;left:439px;top:56px;display:block">
<defs>
<linearGradient id="bg" x1="0" y1="0" x2="0" y2="1"><stop offset="0" stop-color="#8797ac"/><stop offset="0.45" stop-color="#a0abbf"/><stop offset="1" stop-color="#bfc3cf"/></linearGradient>
<radialGradient id="gold1" cx="0.62" cy="0.62" r="0.75"><stop offset="0" stop-color="#d9a449"/><stop offset="0.45" stop-color="#b07c22"/><stop offset="1" stop-color="#8a5f14"/></radialGradient>
<linearGradient id="goldface" x1="0" y1="0" x2="1" y2="0"><stop offset="0" stop-color="#b78829"/><stop offset="0.5" stop-color="#a87a20"/><stop offset="1" stop-color="#a07219"/></linearGradient>
<radialGradient id="hole" cx="0.56" cy="0.68" r="0.55"><stop offset="0" stop-color="#c4c7d4"/><stop offset="0.28" stop-color="#9498ab"/><stop offset="1" stop-color="#868a9e"/></radialGradient>
<clipPath id="cylclip"><path d="M700 437.5 L1000 610.7 L1000 300 L700 300 Z"/></clipPath>
<clipPath id="vpclip"><rect x="439" y="56" width="1059" height="767"/></clipPath>
</defs>
<rect x="439" y="56" width="1059" height="767" fill="url(#bg)"/>
<g clip-path="url(#vpclip)">
<g transform="translate(813 208) rotate(12.5)" stroke="#12121a" stroke-width="1.2" stroke-linejoin="round">
<path d="M-100 -400 L-100 338 A80 80 0 0 0 -20 418 L513 418 L513 -400 Z" fill="#7b7f94"/>
<path d="M-20 418 L513 418 L513 410 L-20 410 Z" fill="#6c7084" stroke="none"/>
<path d="M-92 -400 L-92 338 A72 72 0 0 0 -20 410 L513 410 L513 -400 Z" fill="#70748a"/>
<path d="M-15 410 L513 410 L513 406 L-15 406 Z" fill="#8d92a7" stroke="none"/>
<path d="M-89.5 -400 L-89.5 338 A68 68 0 0 0 -21.5 406 L513 406 L513 -400 Z" fill="#6f7387"/>
<path d="M-91.5 330 L-14.5 330 L-14.5 409.5 L-20 409.5 A71.5 71.5 0 0 1 -91.5 338 Z" fill="#727689"/>
<path d="M-89 333 L-17.5 333 L-17.5 407" fill="none" stroke-width="0.8"/>
<rect x="438" y="-181" width="75" height="79.5" fill="#727689"/>
<path d="M438 -178 L513 -178" fill="none" stroke-width="0.8"/>
<ellipse cx="474.5" cy="-139" rx="11.8" ry="11.3" fill="#5c6073" stroke-width="0.9"/>
<circle cx="476.5" cy="-140.5" r="10.2" fill="url(#hole)" stroke-width="0.9"/>
<ellipse cx="-46.5" cy="363" rx="11.3" ry="10.8" fill="#5c6073" stroke-width="0.9"/>
<circle cx="-44.5" cy="361.5" r="9.7" fill="url(#hole)" stroke-width="0.9"/>
</g>
<path d="M855.6 536.8 L858.5 552.1 L821.5 602 Q814 611 820 618 Q823 621.5 829 622.3 L858.5 628.8 Q866 629.5 869 622 Q872.5 610.5 861 607.5 L848.3 604.3 L882.6 555.7 L880.5 543 Z" fill="#b5bccf" stroke="#1d1d26" stroke-width="1"/>
<g transform="translate(813 208) rotate(12.5)" stroke="#12001a" stroke-width="1.2" stroke-linejoin="round">
<path fill-rule="evenodd" d="M0 0 L498 0 L498 216 A77 77 0 0 0 421 139 L234.5 139.5 L234.3 200.5 L222 200.5 L172.5 130.5 L172 100.8 L131.5 102 L132 120.5 L76.7 215.5 L0 215.5 Z M150 22 L304 22 A18 18 0 0 1 304 58 L150 58 A18 18 0 0 1 150 22 Z" fill="#5c005c"/>
<circle cx="229" cy="38.5" r="17.5" fill="none" stroke="#22222a" stroke-width="0.8"/>
<circle cx="225.3" cy="40.5" r="17.5" fill="#6f7387" stroke="#1a1a22" stroke-width="0.9"/>
<path d="M498 -16 L513 -16 L513 216.5 L498 216.5 Z" fill="#5e045e"/>
<path d="M498 -16 L513 -16 L513 -13 L498 -13 Z" fill="#7a2a7a" stroke="none"/>
<path d="M535 -15 L614 -15 L614.5 215.5 L535 216.5 Z" fill="#5c005c"/>
<path d="M606 -12 L614 -15 L614.5 215.5 L606 215.3 Z" fill="#640864" stroke-width="0.8"/>
<path d="M535 -15 L614 -15 L606 -12 L535 -12 Z" fill="#72126f" stroke-width="0.6"/>
</g>
<g transform="translate(813 208) rotate(12.5)" stroke="#15151c" stroke-width="1">
<rect x="535" y="-400" width="5.8" height="385" fill="#868ba0"/>
<rect x="535" y="216.5" width="5.8" height="500" fill="#868ba0"/>
<rect x="512.7" y="-400" width="22.5" height="1100" fill="#73778b"/>
</g>
<path d="M838.5 385 h7 M842 381.5 v7" stroke="#c9a050" stroke-width="0.9" fill="none"/>
<circle cx="850.5" cy="516" r="20.5" fill="#a5751f" stroke="#1a1208" stroke-width="0.9"/>
<circle cx="872" cy="493.7" r="24" fill="url(#gold1)" stroke="#1a1208" stroke-width="1"/>
<circle cx="859" cy="507.5" r="24" fill="url(#gold1)" stroke="#1a1208" stroke-width="0.9" clip-path="url(#cylclip)"/>
<path d="M770 446.2 L826.5 452.5 L849.8 477.8 L846.5 484 L823 455.5 L768.5 449 Z" fill="#a88a35" stroke="#3a3010" stroke-width="0.6"/>
<path d="M763.8 422.5 Q767 419 771.8 420.2 Q779 422 776.8 428.8 L768 446.9 L824 453.3 L847.3 482 L838.6 495.1 L819.5 468.6 L757 463.8 Q743.5 462 748 452.5 Z" fill="#0a8a0a" stroke="#b6f51e" stroke-width="1.3" stroke-linejoin="round"/>
<path d="M789.7 468.9 L923.9 542.5 L921.5 546.9 L912.2 560 L779.5 483.4 Q778 479 781.7 476.5 Z" fill="url(#goldface)" stroke="#1a1208" stroke-width="0.9" stroke-linejoin="round"/>
<path d="M789.7 468.9 L923.9 542.5 L921.5 546.9 L787.3 473.3 Z" fill="#b98a2c" stroke="#1a1208" stroke-width="0.7" stroke-linejoin="round"/>
<path d="M781.7 476.5 L787.3 473.3" stroke="#1a1208" stroke-width="0.7"/>
<path d="M812 485.5 L893.5 530.3 M813.3 483.2 L894.8 528 M812 485.5 L813.3 483.2 M897.5 529.5 L896 532.5" stroke="#2a1c08" stroke-width="0.8" fill="none"/>
<circle cx="831" cy="500.4" r="5.6" fill="#fff" stroke="#333" stroke-width="0.6"/>
<path d="M831 500.4 L831 494.8 A5.6 5.6 0 0 0 825.4 500.4 Z M831 500.4 L831 506 A5.6 5.6 0 0 0 836.6 500.4 Z" fill="#222"/>
</g>
<g>
<path d="M478.8 794 L483.6 775.5" stroke="#1a741a" stroke-width="3.2"/><path d="M479.3 793 L483.4 777" stroke="#eef6ee" stroke-width="0.9"/><path d="M485.6 766.6 L479.8 775.2 L488.6 777 Z" fill="#1a741a"/>
<path d="M481 797.2 L500 801" stroke="#c81c1c" stroke-width="3.2"/><path d="M483 797.6 L499 800.8" stroke="#fbeaea" stroke-width="0.9"/><path d="M508 802.2 L499.6 796.6 L498.2 805.4 Z" fill="#c81c1c"/>
<circle cx="478" cy="796.8" r="4" fill="#1818a8"/>
<text x="482" y="763.5" font-family="Liberation Sans, sans-serif" font-size="10" fill="#1a641a">Y</text>
<text x="508.3" y="806.3" font-family="Liberation Sans, sans-serif" font-size="10" fill="#d01818">X</text>
</g>
<g>
<rect x="441.5" y="61.5" width="8" height="8" fill="none" stroke="#8e98aa" stroke-width="1"/>
<path d="M443.5 65.5 h4 M445.5 63.5 v4" stroke="#000" stroke-width="1"/>
<path d="M450 65.5 h7" stroke="#a0a8b8" stroke-width="1"/>
<g transform="translate(456.3 56.6) scale(0.98)"><g stroke="#111" stroke-width="0.9" stroke-linejoin="round"><path d="M1.9 6.6 L6.5 3.4 L9 5 L8.8 10.1 L13.4 12.7 L16.8 11.2 L16.8 15 L11.5 17.7 L1.9 8.9 Z" fill="#fff3a0"/><path d="M1.9 6.6 L11.7 14.8 L11.5 17.7 L1.9 8.9 Z" fill="#f5d21a"/><path d="M11.7 14.8 L16.8 12 L16.8 15 L11.5 17.7 Z" fill="#f5b042"/><path d="M8.8 4.7 L13 2.4 L17.6 5.5 L13.4 7.8 Z" fill="#7be08a" stroke="#0a5a18"/><path d="M8.8 4.7 L13.4 7.8 L13.4 12.7 L8.8 10.1 Z" fill="#12b030" stroke="#0a5a18"/><path d="M13.4 7.8 L17.6 5.5 L17.6 10.4 L13.4 12.7 Z" fill="#0c8a24" stroke="#0a5a18"/></g></g>
<text x="478" y="71.5" font-family="Liberation Sans, sans-serif" font-size="11" fill="#000" textLength="150" lengthAdjust="spacing">Türschloss  (Standard&lt;Anzei...</text>
</g>
</svg>
<div class="abs" style="left:434.8px;top:441px;width:12px;height:28.5px;background:#e6e7f0;border:1px solid #5a5e78;border-left:none;border-top-color:#9a9db4;border-radius:0 3.5px 3.5px 0;box-sizing:border-box"></div>
<svg class="ic" style="left:441.2px;top:446.3px" width="3.5" height="5" viewBox="0 0 3.5 5"><path d="M3.5 0 V5 L0 2.5 Z" fill="#6a6d88"/></svg>
<svg class="ic" style="left:441.2px;top:453.1px" width="3.5" height="5" viewBox="0 0 3.5 5"><path d="M3.5 0 V5 L0 2.5 Z" fill="#6a6d88"/></svg>
<svg class="ic" style="left:441.2px;top:459.9px" width="3.5" height="5" viewBox="0 0 3.5 5"><path d="M3.5 0 V5 L0 2.5 Z" fill="#6a6d88"/></svg>
</div></body></html>
